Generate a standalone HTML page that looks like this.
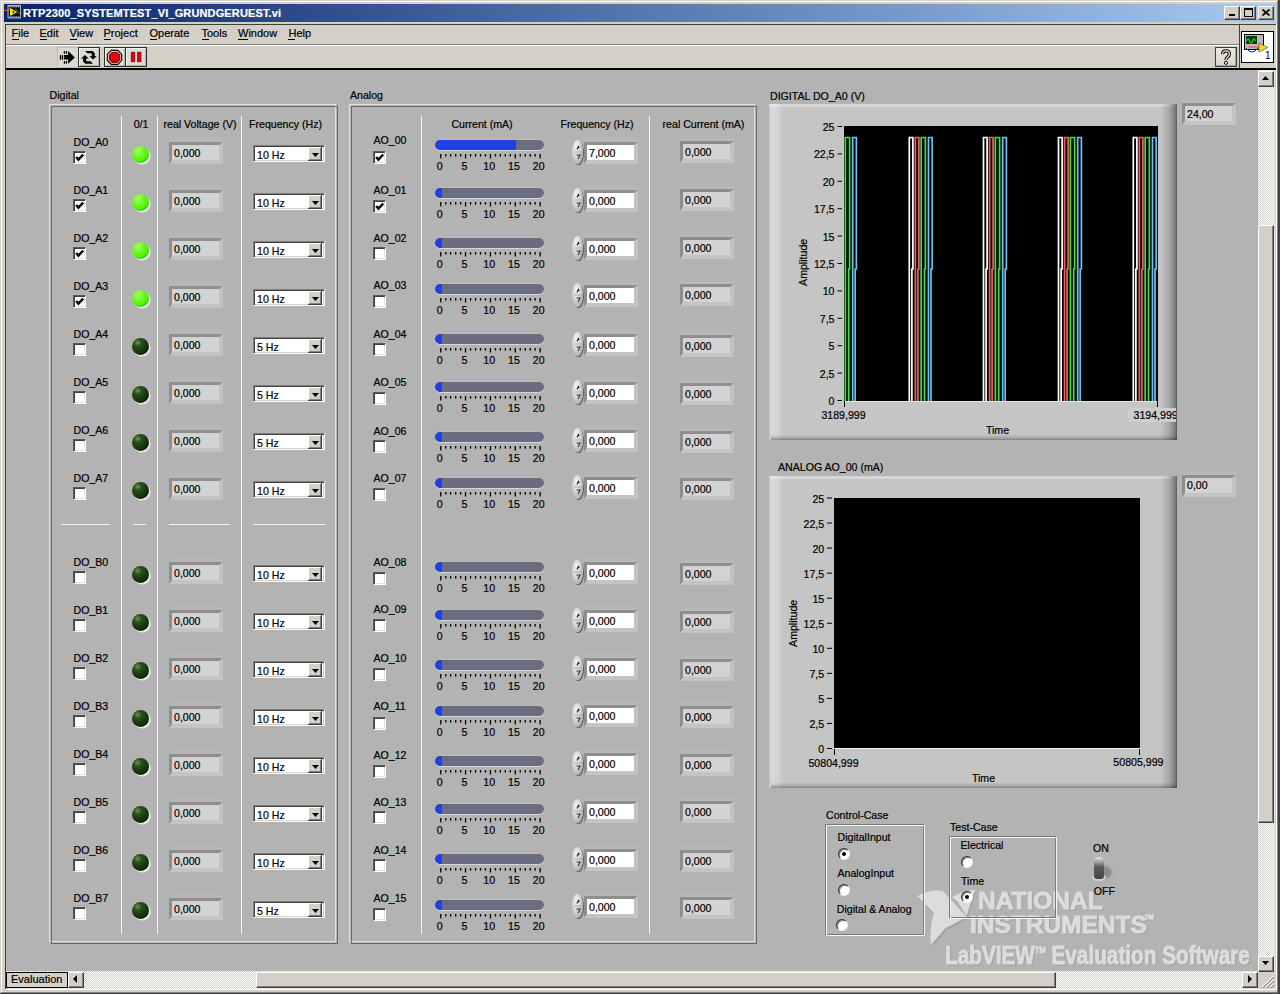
<!DOCTYPE html>
<html><head><meta charset="utf-8"><style>
html,body{margin:0;padding:0;width:1280px;height:994px;overflow:hidden;background:#d4d0c8;position:relative}
div,svg{position:absolute}
.abs{position:absolute}
.t{font-family:"Liberation Sans",sans-serif;white-space:nowrap;line-height:1.2;-webkit-text-stroke-width:0.2px}
.cb{width:11px;height:11px;background:#fff;border-top:1px solid #5a5a5a;border-left:1px solid #5a5a5a;border-right:1px solid #fff;border-bottom:1px solid #fff;box-shadow:inset 1px 1px 0 #404040,inset -1px -1px 0 #e0e0e0}
.led{width:17px;height:17px;border-radius:50%;box-shadow:1.5px 1.5px 1px rgba(250,255,250,0.85)}
.ledon{background:radial-gradient(circle at 35% 30%,#a8ff78 0,#70ff22 30%,#55ee10 60%,#3cb818 85%,#2c6e22 100%)}
.ledoff{background:radial-gradient(circle at 33% 28%,#6e9a5a 0,#28521c 22%,#1a3c12 48%,#10260a 75%,#050d03 100%)}
.indtop{height:5px;background:linear-gradient(#b4b4b4,#b9b9b9)}
.ind{height:15px;background:#d3d3d3;border-top:3px solid #8e8e8e;border-left:3px solid #8e8e8e;border-right:4px solid #c2c2c2;border-bottom:4px solid #c4c4c4}
.ctl{background:#fff}
.incr{width:11px;height:24px;border-radius:50%;box-shadow:1px 1px 0 #5a5a5a;background:radial-gradient(ellipse at 40% 30%,#f4f4f4 0,#d2d2d2 45%,#a8a8a8 80%,#6a6a6a 100%)}
.ring{width:70px;height:15px;background:#fff;border-top:1px solid #808080;border-left:1px solid #808080;border-right:1px solid #fff;border-bottom:1px solid #fff;box-shadow:inset 1px 1px 0 #404040,inset -1px -1px 0 #d4d0c8}
.rbtn{left:54px;top:1px;width:13px;height:13px;background:#d4d0c8;border-right:1px solid #404040;border-bottom:1px solid #404040;box-shadow:inset 1px 1px 0 #fff,inset -1px -1px 0 #808080}
.sl{width:109px;height:10px;border-radius:5px;background:#6c6c80;overflow:hidden;box-shadow:0 1px 0 #d6d6d6,0 -1px 0 #bcbcbc}
.slf{left:0;top:0;height:10px;background:#1f40e4;border-radius:5px 0 0 5px}
.btn{background:#d4d0c8;border-top:1px solid #fff;border-left:1px solid #fff;border-right:1px solid #404040;border-bottom:1px solid #404040;box-shadow:inset -1px -1px 0 #808080}
.chk{background-color:#ebe9e5;background-image:repeating-conic-gradient(#ffffff 0 25%,#d4d0c8 0 50%);background-size:2px 2px}
</style></head><body>
<div style="left:0px;top:0px;width:1280px;height:1px;background:#d4d0c8"></div>
<div style="left:1px;top:1px;width:1277px;height:1px;background:#fff"></div>
<div style="left:1px;top:1px;width:1px;height:991px;background:#fff"></div>
<div style="left:1278px;top:0px;width:2px;height:994px;background:#404040"></div>
<div style="left:1277px;top:1px;width:1px;height:992px;background:#808080"></div>
<div style="left:0px;top:993px;width:1280px;height:1px;background:#404040"></div>
<div style="left:1px;top:992px;width:1277px;height:1px;background:#808080"></div>
<div style="left:4px;top:4px;width:1271px;height:18px;background:linear-gradient(90deg,#0a246a,#a6caf0)"></div>
<svg style="left:0;top:0" width="30" height="24"><rect x="8" y="5.5" width="12.5" height="12.5" fill="#28305a" stroke="#a8b0c0" stroke-width="1"/><path d="M9 6.5 H20 M9 17 H20" stroke="#d8dce4" stroke-width="1.2" stroke-dasharray="1.2 1"/><rect x="9" y="8" width="11" height="8" fill="#101010"/><path d="M4 10.5 H9" stroke="#c86030" stroke-width="1"/><path d="M18 13 H22" stroke="#c86030" stroke-width="1"/><path d="M10 8 V16 L17.5 12 Z" fill="#f2e030"/><path d="M10 8.5 V10" stroke="#ffb000" stroke-width="1.5"/><path d="M12.3 12 L13.5 10.8 L14.7 12 L13.5 13.2Z" fill="#302000"/><path d="M15 9 Q17 9.5 18.5 11" stroke="#2a8a2a" stroke-width="1" fill="none"/></svg>
<div class="t" style="left:23px;top:6.59px;font-size:11px;font-weight:700;color:#fff;letter-spacing:0.14px">RTP2300_SYSTEMTEST_VI_GRUNDGERUEST.vi</div>
<div class="btn" style="left:1224px;top:6px;width:14px;height:12px"></div>
<div class="btn" style="left:1240px;top:6px;width:14px;height:12px"></div>
<div class="btn" style="left:1258px;top:6px;width:14px;height:12px"></div>
<div style="left:1229px;top:14px;width:6px;height:2px;background:#000"></div>
<div style="left:1244px;top:8px;width:7px;height:6px;border:1px solid #000;border-top-width:2px"></div>
<svg style="left:1262px;top:9px" width="8" height="7"><path d="M0.5 0.5 L7.5 6.5 M7.5 0.5 L0.5 6.5" stroke="#000" stroke-width="1.6"/></svg>
<div style="left:5px;top:24px;width:1px;height:965px;background:#404040"></div>
<div style="left:5px;top:24px;width:1271px;height:1px;background:#404040"></div>
<div style="left:1276px;top:24px;width:1px;height:966px;background:#fff"></div>
<div style="left:5px;top:989px;width:1272px;height:1px;background:#fff"></div>
<div class="t" style="left:11.5px;top:27.09px;font-size:11px;font-weight:400;color:#000;">File</div>
<div style="left:12px;top:39px;width:7px;height:1px;background:#000"></div>
<div class="t" style="left:39.5px;top:27.09px;font-size:11px;font-weight:400;color:#000;">Edit</div>
<div style="left:40px;top:39px;width:7px;height:1px;background:#000"></div>
<div class="t" style="left:69.5px;top:27.09px;font-size:11px;font-weight:400;color:#000;">View</div>
<div style="left:70px;top:39px;width:7px;height:1px;background:#000"></div>
<div class="t" style="left:103.5px;top:27.09px;font-size:11px;font-weight:400;color:#000;">Project</div>
<div style="left:104px;top:39px;width:7px;height:1px;background:#000"></div>
<div class="t" style="left:149.5px;top:27.09px;font-size:11px;font-weight:400;color:#000;">Operate</div>
<div style="left:150px;top:39px;width:7px;height:1px;background:#000"></div>
<div class="t" style="left:201.5px;top:27.09px;font-size:11px;font-weight:400;color:#000;">Tools</div>
<div style="left:202px;top:39px;width:7px;height:1px;background:#000"></div>
<div class="t" style="left:238px;top:27.09px;font-size:11px;font-weight:400;color:#000;">Window</div>
<div style="left:238px;top:39px;width:10px;height:1px;background:#000"></div>
<div class="t" style="left:288.5px;top:27.09px;font-size:11px;font-weight:400;color:#000;">Help</div>
<div style="left:288px;top:39px;width:7px;height:1px;background:#000"></div>
<div style="left:6px;top:44px;width:1233px;height:1px;background:#808080"></div>
<div style="left:6px;top:45px;width:1233px;height:1px;background:#fff"></div>
<div style="left:1239px;top:25px;width:1px;height:44px;background:#404040"></div>
<div style="left:1241px;top:31px;width:31px;height:30px;background:#fff;border:1px solid #000"></div>
<svg style="left:1242px;top:32px" width="31" height="30"><rect x="2.5" y="2.5" width="19" height="15" fill="#b9b9b9" stroke="#000" stroke-width="1"/><rect x="4" y="4" width="11" height="8" fill="#0a3a0a"/><path d="M4.5 9 Q6 4 7.5 9 T10.5 9 T13.5 9" stroke="#2f2" stroke-width="1" fill="none"/><path d="M4 16 Q10 24 16 16" stroke="#22a" stroke-width="1" fill="none"/><path d="M6 15 H20" stroke="#e66" stroke-width="1.5"/><path d="M17 11 L17 20 L26 15.5Z" fill="#f2e020" stroke="#444" stroke-width="0.6"/><text x="23" y="27" font-family="Liberation Sans" font-size="10" fill="#000">1</text></svg>
<div style="left:6px;top:68px;width:1270px;height:2px;background:#000"></div>
<div style="left:57px;top:47px;width:20px;height:19px;background:#dcd9d2;border:1px solid #c4c1ba;border-top-color:#bdbab3;border-left-color:#bdbab3"></div>
<svg style="left:0;top:0" width="160" height="70"><path d="M64.1 55.1 H68.1 V51 L74.9 57.4 L68.1 63.8 V59.6 H64.1Z" fill="#000"/><rect x="59.8" y="55.1" width="1.3" height="4.6" fill="#000"/><rect x="61.8" y="55.1" width="1.3" height="4.6" fill="#000"/><rect x="63.8" y="51.1" width="1.3" height="2.6" fill="#000"/><rect x="65.8" y="51.1" width="1.3" height="2.6" fill="#000"/><rect x="63.8" y="61.1" width="1.3" height="2.6" fill="#000"/><rect x="65.8" y="61.1" width="1.3" height="2.6" fill="#000"/></svg>
<div style="left:78px;top:47px;width:20px;height:18px;background:#dedbd4;border:1px solid #2e2e2e;box-shadow:inset 1px 1px 0 #f4f2ee,inset -1px -1px 0 #b4b1aa"></div>
<div style="left:104px;top:47px;width:20px;height:18px;background:#dedbd4;border:1px solid #2e2e2e;box-shadow:inset 1px 1px 0 #f4f2ee,inset -1px -1px 0 #b4b1aa"></div>
<div style="left:125px;top:47px;width:20px;height:18px;background:#dedbd4;border:1px solid #2e2e2e;box-shadow:inset 1px 1px 0 #f4f2ee,inset -1px -1px 0 #b4b1aa"></div>
<svg style="left:0;top:0" width="160" height="70"><path d="M85.1 51.1 H92.6 L94.8 53.3 V56.3 H96.8 L93.1 59.5 L89.3 56.3 H91.7 V53.3 H87.3 Z" fill="#000"/><path d="M92.9 63.7 H85.4 L83.1 61.5 V58.4 H81.1 L84.9 55.1 L88.8 58.4 H86.2 V61.3 H90.7 Z" fill="#000"/><path d="M111.3 50.4 H117.8 L121.7 54.4 V60.4 L117.8 64.4 H111.3 L107.3 60.4 V54.4 Z" fill="#ebe6e2" stroke="#000" stroke-width="1.1"/><path d="M111.8 52.4 H117.3 L119.8 54.9 V59.9 L117.3 62.4 H111.8 L109.3 59.9 V54.9 Z" fill="#e4000e" stroke="#5a0000" stroke-width="0.9"/><rect x="131.2" y="52.2" width="3.6" height="9.6" fill="#dc0010" stroke="#800000" stroke-width="0.7"/><rect x="137.4" y="52.2" width="3.6" height="9.6" fill="#dc0010" stroke="#800000" stroke-width="0.7"/></svg>
<div style="left:1215px;top:47px;width:20px;height:18px;background:linear-gradient(#eceae6,#d8d5ce);border:1px solid #3a3a3a;box-shadow:inset -1px -1px 0 #a8a59e"></div>
<svg style="left:1219px;top:49px" width="14" height="17"><path d="M3.6 5.2 Q3.6 1.8 7 1.8 Q10.4 1.8 10.4 5 Q10.4 7 8.2 8.4 Q7 9.2 7 11" stroke="#000" stroke-width="3.2" fill="none"/><path d="M3.6 5.2 Q3.6 1.8 7 1.8 Q10.4 1.8 10.4 5 Q10.4 7 8.2 8.4 Q7 9.2 7 11" stroke="#fffbd0" stroke-width="1.2" fill="none"/><circle cx="7" cy="13.8" r="1.6" fill="#fffbd0" stroke="#000" stroke-width="1"/></svg>
<div style="left:6px;top:70px;width:1252px;height:901px;background:#b3b3b3"></div>
<div class="chk" style="left:1258px;top:70px;width:17px;height:901px"></div>
<div class="btn" style="left:1258px;top:71px;width:14px;height:14px"></div>
<svg style="left:1262px;top:76px" width="7" height="4"><path d="M0 4 H7 L3.5 0Z" fill="#000"/></svg>
<div class="btn" style="left:1258px;top:225px;width:14px;height:596px"></div>
<div class="btn" style="left:1258px;top:956px;width:14px;height:14px"></div>
<svg style="left:1262px;top:961px" width="7" height="4"><path d="M0 0 H7 L3.5 4Z" fill="#000"/></svg>
<div class="chk" style="left:6px;top:971px;width:1252px;height:18px"></div>
<div style="left:6px;top:972px;width:60px;height:14px;background:#d4d0c8;border:1px solid #000"></div>
<div class="t" style="left:11px;top:973.09px;font-size:11px;font-weight:400;color:#000;">Evaluation</div>
<div class="btn" style="left:68px;top:972px;width:14px;height:14px"></div>
<svg style="left:73px;top:975px" width="4" height="8"><path d="M4 0 V8 L0 4Z" fill="#000"/></svg>
<div class="btn" style="left:256px;top:972px;width:798px;height:14px"></div>
<div class="btn" style="left:1242px;top:972px;width:14px;height:14px"></div>
<svg style="left:1248px;top:975px" width="4" height="8"><path d="M0 0 V8 L4 4Z" fill="#000"/></svg>
<div style="left:1258px;top:972px;width:17px;height:17px;background:#d4d0c8"></div>
<svg style="left:1258px;top:972px" width="17" height="17"><path d="M15 4 L4 15 M15 8 L8 15 M15 12 L12 15" stroke="#fff" stroke-width="1"/><path d="M16 5 L5 16 M16 9 L9 16 M16 13 L13 16" stroke="#808080" stroke-width="1"/></svg>
<div class="t" style="left:49.5px;top:88.57px;font-size:10.6px;font-weight:400;color:#000;">Digital</div>
<div style="left:49px;top:104px;width:287px;height:838px;border:1px solid #e2e2e2;box-sizing:border-box"></div>
<div style="left:51px;top:106px;width:287px;height:838px;border:1px solid #6a6a6a;box-sizing:border-box"></div>
<div style="left:121px;top:116px;width:1px;height:818px;background:#f4f4f4"></div>
<div style="left:157px;top:116px;width:1px;height:818px;background:#f4f4f4"></div>
<div style="left:241px;top:116px;width:1px;height:818px;background:#f4f4f4"></div>
<div class="t" style="left:-9px;width:300px;text-align:center;top:117.77px;font-size:10.6px;font-weight:400;color:#000;">0/1</div>
<div class="t" style="left:50px;width:300px;text-align:center;top:117.77px;font-size:10.6px;font-weight:400;color:#000;">real Voltage (V)</div>
<div class="t" style="left:135.5px;width:300px;text-align:center;top:117.57px;font-size:10.6px;font-weight:400;color:#000;">Frequency (Hz)</div>
<div class="t" style="left:73.5px;top:135.97px;font-size:10.6px;font-weight:400;color:#000;">DO_A0</div>
<div class="cb" style="left:73px;top:151px"><svg width="9" height="9" style="position:absolute;left:1px;top:1px"><path d="M1.2 4 L3.4 6.6 L8.2 1.6" stroke="#000" stroke-width="2.4" fill="none"/></svg></div>
<div class="led ledon" style="left:132px;top:146px"></div>
<div class="indtop" style="left:169px;top:137px;width:54px"></div>
<div class="ind" style="left:169px;top:142px;width:47px"></div>
<div class="t" style="left:174px;top:146.97px;font-size:10.6px;font-weight:400;color:#000;">0,000</div>
<div class="ring" style="left:253px;top:145px"><div class="rbtn"><svg width="7" height="4" style="position:absolute;left:4px;top:6px"><path d="M0 0 H7 L3.5 4Z" fill="#000"/></svg></div></div>
<div class="t" style="left:257px;top:148.97px;font-size:10.6px;font-weight:400;color:#000;">10 Hz</div>
<div class="t" style="left:73.5px;top:183.97px;font-size:10.6px;font-weight:400;color:#000;">DO_A1</div>
<div class="cb" style="left:73px;top:199px"><svg width="9" height="9" style="position:absolute;left:1px;top:1px"><path d="M1.2 4 L3.4 6.6 L8.2 1.6" stroke="#000" stroke-width="2.4" fill="none"/></svg></div>
<div class="led ledon" style="left:132px;top:194px"></div>
<div class="indtop" style="left:169px;top:185px;width:54px"></div>
<div class="ind" style="left:169px;top:190px;width:47px"></div>
<div class="t" style="left:174px;top:194.97px;font-size:10.6px;font-weight:400;color:#000;">0,000</div>
<div class="ring" style="left:253px;top:193px"><div class="rbtn"><svg width="7" height="4" style="position:absolute;left:4px;top:6px"><path d="M0 0 H7 L3.5 4Z" fill="#000"/></svg></div></div>
<div class="t" style="left:257px;top:196.97px;font-size:10.6px;font-weight:400;color:#000;">10 Hz</div>
<div class="t" style="left:73.5px;top:231.97px;font-size:10.6px;font-weight:400;color:#000;">DO_A2</div>
<div class="cb" style="left:73px;top:247px"><svg width="9" height="9" style="position:absolute;left:1px;top:1px"><path d="M1.2 4 L3.4 6.6 L8.2 1.6" stroke="#000" stroke-width="2.4" fill="none"/></svg></div>
<div class="led ledon" style="left:132px;top:242px"></div>
<div class="indtop" style="left:169px;top:233px;width:54px"></div>
<div class="ind" style="left:169px;top:238px;width:47px"></div>
<div class="t" style="left:174px;top:242.97px;font-size:10.6px;font-weight:400;color:#000;">0,000</div>
<div class="ring" style="left:253px;top:241px"><div class="rbtn"><svg width="7" height="4" style="position:absolute;left:4px;top:6px"><path d="M0 0 H7 L3.5 4Z" fill="#000"/></svg></div></div>
<div class="t" style="left:257px;top:244.97px;font-size:10.6px;font-weight:400;color:#000;">10 Hz</div>
<div class="t" style="left:73.5px;top:279.97px;font-size:10.6px;font-weight:400;color:#000;">DO_A3</div>
<div class="cb" style="left:73px;top:295px"><svg width="9" height="9" style="position:absolute;left:1px;top:1px"><path d="M1.2 4 L3.4 6.6 L8.2 1.6" stroke="#000" stroke-width="2.4" fill="none"/></svg></div>
<div class="led ledon" style="left:132px;top:290px"></div>
<div class="indtop" style="left:169px;top:281px;width:54px"></div>
<div class="ind" style="left:169px;top:286px;width:47px"></div>
<div class="t" style="left:174px;top:290.97px;font-size:10.6px;font-weight:400;color:#000;">0,000</div>
<div class="ring" style="left:253px;top:289px"><div class="rbtn"><svg width="7" height="4" style="position:absolute;left:4px;top:6px"><path d="M0 0 H7 L3.5 4Z" fill="#000"/></svg></div></div>
<div class="t" style="left:257px;top:292.97px;font-size:10.6px;font-weight:400;color:#000;">10 Hz</div>
<div class="t" style="left:73.5px;top:327.97px;font-size:10.6px;font-weight:400;color:#000;">DO_A4</div>
<div class="cb" style="left:73px;top:343px"></div>
<div class="led ledoff" style="left:132px;top:338px"></div>
<div class="indtop" style="left:169px;top:329px;width:54px"></div>
<div class="ind" style="left:169px;top:334px;width:47px"></div>
<div class="t" style="left:174px;top:338.97px;font-size:10.6px;font-weight:400;color:#000;">0,000</div>
<div class="ring" style="left:253px;top:337px"><div class="rbtn"><svg width="7" height="4" style="position:absolute;left:4px;top:6px"><path d="M0 0 H7 L3.5 4Z" fill="#000"/></svg></div></div>
<div class="t" style="left:257px;top:340.97px;font-size:10.6px;font-weight:400;color:#000;">5 Hz</div>
<div class="t" style="left:73.5px;top:375.97px;font-size:10.6px;font-weight:400;color:#000;">DO_A5</div>
<div class="cb" style="left:73px;top:391px"></div>
<div class="led ledoff" style="left:132px;top:386px"></div>
<div class="indtop" style="left:169px;top:377px;width:54px"></div>
<div class="ind" style="left:169px;top:382px;width:47px"></div>
<div class="t" style="left:174px;top:386.97px;font-size:10.6px;font-weight:400;color:#000;">0,000</div>
<div class="ring" style="left:253px;top:385px"><div class="rbtn"><svg width="7" height="4" style="position:absolute;left:4px;top:6px"><path d="M0 0 H7 L3.5 4Z" fill="#000"/></svg></div></div>
<div class="t" style="left:257px;top:388.97px;font-size:10.6px;font-weight:400;color:#000;">5 Hz</div>
<div class="t" style="left:73.5px;top:423.97px;font-size:10.6px;font-weight:400;color:#000;">DO_A6</div>
<div class="cb" style="left:73px;top:439px"></div>
<div class="led ledoff" style="left:132px;top:434px"></div>
<div class="indtop" style="left:169px;top:425px;width:54px"></div>
<div class="ind" style="left:169px;top:430px;width:47px"></div>
<div class="t" style="left:174px;top:434.97px;font-size:10.6px;font-weight:400;color:#000;">0,000</div>
<div class="ring" style="left:253px;top:433px"><div class="rbtn"><svg width="7" height="4" style="position:absolute;left:4px;top:6px"><path d="M0 0 H7 L3.5 4Z" fill="#000"/></svg></div></div>
<div class="t" style="left:257px;top:436.97px;font-size:10.6px;font-weight:400;color:#000;">5 Hz</div>
<div class="t" style="left:73.5px;top:471.97px;font-size:10.6px;font-weight:400;color:#000;">DO_A7</div>
<div class="cb" style="left:73px;top:487px"></div>
<div class="led ledoff" style="left:132px;top:482px"></div>
<div class="indtop" style="left:169px;top:473px;width:54px"></div>
<div class="ind" style="left:169px;top:478px;width:47px"></div>
<div class="t" style="left:174px;top:482.97px;font-size:10.6px;font-weight:400;color:#000;">0,000</div>
<div class="ring" style="left:253px;top:481px"><div class="rbtn"><svg width="7" height="4" style="position:absolute;left:4px;top:6px"><path d="M0 0 H7 L3.5 4Z" fill="#000"/></svg></div></div>
<div class="t" style="left:257px;top:484.97px;font-size:10.6px;font-weight:400;color:#000;">10 Hz</div>
<div class="t" style="left:73.5px;top:555.97px;font-size:10.6px;font-weight:400;color:#000;">DO_B0</div>
<div class="cb" style="left:73px;top:571px"></div>
<div class="led ledoff" style="left:132px;top:566px"></div>
<div class="indtop" style="left:169px;top:557px;width:54px"></div>
<div class="ind" style="left:169px;top:562px;width:47px"></div>
<div class="t" style="left:174px;top:566.97px;font-size:10.6px;font-weight:400;color:#000;">0,000</div>
<div class="ring" style="left:253px;top:565px"><div class="rbtn"><svg width="7" height="4" style="position:absolute;left:4px;top:6px"><path d="M0 0 H7 L3.5 4Z" fill="#000"/></svg></div></div>
<div class="t" style="left:257px;top:568.97px;font-size:10.6px;font-weight:400;color:#000;">10 Hz</div>
<div class="t" style="left:73.5px;top:603.97px;font-size:10.6px;font-weight:400;color:#000;">DO_B1</div>
<div class="cb" style="left:73px;top:619px"></div>
<div class="led ledoff" style="left:132px;top:614px"></div>
<div class="indtop" style="left:169px;top:605px;width:54px"></div>
<div class="ind" style="left:169px;top:610px;width:47px"></div>
<div class="t" style="left:174px;top:614.97px;font-size:10.6px;font-weight:400;color:#000;">0,000</div>
<div class="ring" style="left:253px;top:613px"><div class="rbtn"><svg width="7" height="4" style="position:absolute;left:4px;top:6px"><path d="M0 0 H7 L3.5 4Z" fill="#000"/></svg></div></div>
<div class="t" style="left:257px;top:616.97px;font-size:10.6px;font-weight:400;color:#000;">10 Hz</div>
<div class="t" style="left:73.5px;top:651.97px;font-size:10.6px;font-weight:400;color:#000;">DO_B2</div>
<div class="cb" style="left:73px;top:667px"></div>
<div class="led ledoff" style="left:132px;top:662px"></div>
<div class="indtop" style="left:169px;top:653px;width:54px"></div>
<div class="ind" style="left:169px;top:658px;width:47px"></div>
<div class="t" style="left:174px;top:662.97px;font-size:10.6px;font-weight:400;color:#000;">0,000</div>
<div class="ring" style="left:253px;top:661px"><div class="rbtn"><svg width="7" height="4" style="position:absolute;left:4px;top:6px"><path d="M0 0 H7 L3.5 4Z" fill="#000"/></svg></div></div>
<div class="t" style="left:257px;top:664.97px;font-size:10.6px;font-weight:400;color:#000;">10 Hz</div>
<div class="t" style="left:73.5px;top:699.97px;font-size:10.6px;font-weight:400;color:#000;">DO_B3</div>
<div class="cb" style="left:73px;top:715px"></div>
<div class="led ledoff" style="left:132px;top:710px"></div>
<div class="indtop" style="left:169px;top:701px;width:54px"></div>
<div class="ind" style="left:169px;top:706px;width:47px"></div>
<div class="t" style="left:174px;top:710.97px;font-size:10.6px;font-weight:400;color:#000;">0,000</div>
<div class="ring" style="left:253px;top:709px"><div class="rbtn"><svg width="7" height="4" style="position:absolute;left:4px;top:6px"><path d="M0 0 H7 L3.5 4Z" fill="#000"/></svg></div></div>
<div class="t" style="left:257px;top:712.97px;font-size:10.6px;font-weight:400;color:#000;">10 Hz</div>
<div class="t" style="left:73.5px;top:747.97px;font-size:10.6px;font-weight:400;color:#000;">DO_B4</div>
<div class="cb" style="left:73px;top:763px"></div>
<div class="led ledoff" style="left:132px;top:758px"></div>
<div class="indtop" style="left:169px;top:749px;width:54px"></div>
<div class="ind" style="left:169px;top:754px;width:47px"></div>
<div class="t" style="left:174px;top:758.97px;font-size:10.6px;font-weight:400;color:#000;">0,000</div>
<div class="ring" style="left:253px;top:757px"><div class="rbtn"><svg width="7" height="4" style="position:absolute;left:4px;top:6px"><path d="M0 0 H7 L3.5 4Z" fill="#000"/></svg></div></div>
<div class="t" style="left:257px;top:760.97px;font-size:10.6px;font-weight:400;color:#000;">10 Hz</div>
<div class="t" style="left:73.5px;top:795.97px;font-size:10.6px;font-weight:400;color:#000;">DO_B5</div>
<div class="cb" style="left:73px;top:811px"></div>
<div class="led ledoff" style="left:132px;top:806px"></div>
<div class="indtop" style="left:169px;top:797px;width:54px"></div>
<div class="ind" style="left:169px;top:802px;width:47px"></div>
<div class="t" style="left:174px;top:806.97px;font-size:10.6px;font-weight:400;color:#000;">0,000</div>
<div class="ring" style="left:253px;top:805px"><div class="rbtn"><svg width="7" height="4" style="position:absolute;left:4px;top:6px"><path d="M0 0 H7 L3.5 4Z" fill="#000"/></svg></div></div>
<div class="t" style="left:257px;top:808.97px;font-size:10.6px;font-weight:400;color:#000;">10 Hz</div>
<div class="t" style="left:73.5px;top:843.97px;font-size:10.6px;font-weight:400;color:#000;">DO_B6</div>
<div class="cb" style="left:73px;top:859px"></div>
<div class="led ledoff" style="left:132px;top:854px"></div>
<div class="indtop" style="left:169px;top:845px;width:54px"></div>
<div class="ind" style="left:169px;top:850px;width:47px"></div>
<div class="t" style="left:174px;top:854.97px;font-size:10.6px;font-weight:400;color:#000;">0,000</div>
<div class="ring" style="left:253px;top:853px"><div class="rbtn"><svg width="7" height="4" style="position:absolute;left:4px;top:6px"><path d="M0 0 H7 L3.5 4Z" fill="#000"/></svg></div></div>
<div class="t" style="left:257px;top:856.97px;font-size:10.6px;font-weight:400;color:#000;">10 Hz</div>
<div class="t" style="left:73.5px;top:891.97px;font-size:10.6px;font-weight:400;color:#000;">DO_B7</div>
<div class="cb" style="left:73px;top:907px"></div>
<div class="led ledoff" style="left:132px;top:902px"></div>
<div class="indtop" style="left:169px;top:893px;width:54px"></div>
<div class="ind" style="left:169px;top:898px;width:47px"></div>
<div class="t" style="left:174px;top:902.97px;font-size:10.6px;font-weight:400;color:#000;">0,000</div>
<div class="ring" style="left:253px;top:901px"><div class="rbtn"><svg width="7" height="4" style="position:absolute;left:4px;top:6px"><path d="M0 0 H7 L3.5 4Z" fill="#000"/></svg></div></div>
<div class="t" style="left:257px;top:904.97px;font-size:10.6px;font-weight:400;color:#000;">5 Hz</div>
<div style="left:61px;top:524px;width:49px;height:1px;background:#f4f4f4"></div>
<div style="left:133px;top:524px;width:13px;height:1px;background:#f4f4f4"></div>
<div style="left:169px;top:524px;width:61px;height:1px;background:#f4f4f4"></div>
<div style="left:253px;top:524px;width:72px;height:1px;background:#f4f4f4"></div>
<div class="t" style="left:350px;top:88.57px;font-size:10.6px;font-weight:400;color:#000;">Analog</div>
<div style="left:349px;top:104px;width:406px;height:838px;border:1px solid #e2e2e2;box-sizing:border-box"></div>
<div style="left:351px;top:106px;width:406px;height:838px;border:1px solid #6a6a6a;box-sizing:border-box"></div>
<div style="left:421px;top:116px;width:1px;height:818px;background:#f4f4f4"></div>
<div style="left:649px;top:116px;width:1px;height:818px;background:#f4f4f4"></div>
<div class="t" style="left:332px;width:300px;text-align:center;top:117.57px;font-size:10.6px;font-weight:400;color:#000;">Current (mA)</div>
<div class="t" style="left:447px;width:300px;text-align:center;top:117.57px;font-size:10.6px;font-weight:400;color:#000;">Frequency (Hz)</div>
<div class="t" style="left:553.5px;width:300px;text-align:center;top:117.57px;font-size:10.6px;font-weight:400;color:#000;">real Current (mA)</div>
<div class="t" style="left:373.5px;top:134.47px;font-size:10.6px;font-weight:400;color:#000;">AO_00</div>
<div class="cb" style="left:373px;top:151px"><svg width="9" height="9" style="position:absolute;left:1px;top:1px"><path d="M1.2 4 L3.4 6.6 L8.2 1.6" stroke="#000" stroke-width="2.4" fill="none"/></svg></div>
<div class="sl" style="left:435px;top:140px"><div class="slf" style="width:81px"></div></div>
<svg class="abs" style="left:0;top:154.2px" width="1280" height="5"><rect x="440.1" y="0" width="1.3" height="4.5" fill="#000"/><rect x="445.1" y="0" width="1.3" height="2.6" fill="#000"/><rect x="450.0" y="0" width="1.3" height="2.6" fill="#000"/><rect x="455.0" y="0" width="1.3" height="2.6" fill="#000"/><rect x="460.0" y="0" width="1.3" height="2.6" fill="#000"/><rect x="464.9" y="0" width="1.3" height="4.5" fill="#000"/><rect x="469.9" y="0" width="1.3" height="2.6" fill="#000"/><rect x="474.9" y="0" width="1.3" height="2.6" fill="#000"/><rect x="479.9" y="0" width="1.3" height="2.6" fill="#000"/><rect x="484.8" y="0" width="1.3" height="2.6" fill="#000"/><rect x="489.8" y="0" width="1.3" height="4.5" fill="#000"/><rect x="494.8" y="0" width="1.3" height="2.6" fill="#000"/><rect x="499.7" y="0" width="1.3" height="2.6" fill="#000"/><rect x="504.7" y="0" width="1.3" height="2.6" fill="#000"/><rect x="509.7" y="0" width="1.3" height="2.6" fill="#000"/><rect x="514.6" y="0" width="1.3" height="4.5" fill="#000"/><rect x="519.6" y="0" width="1.3" height="2.6" fill="#000"/><rect x="524.6" y="0" width="1.3" height="2.6" fill="#000"/><rect x="529.6" y="0" width="1.3" height="2.6" fill="#000"/><rect x="534.5" y="0" width="1.3" height="2.6" fill="#000"/><rect x="539.5" y="0" width="1.3" height="4.5" fill="#000"/></svg>
<div class="t" style="left:289.7px;width:300px;text-align:center;top:159.77px;font-size:10.6px;font-weight:400;color:#000;">0</div>
<div class="t" style="left:314.45px;width:300px;text-align:center;top:159.77px;font-size:10.6px;font-weight:400;color:#000;">5</div>
<div class="t" style="left:339.2px;width:300px;text-align:center;top:159.77px;font-size:10.6px;font-weight:400;color:#000;">10</div>
<div class="t" style="left:363.95000000000005px;width:300px;text-align:center;top:159.77px;font-size:10.6px;font-weight:400;color:#000;">15</div>
<div class="t" style="left:388.70000000000005px;width:300px;text-align:center;top:159.77px;font-size:10.6px;font-weight:400;color:#000;">20</div>
<div class="indtop" style="left:584px;top:137px;width:54px"></div>
<div class="ind ctl" style="left:584px;top:142px;width:47px"></div>
<div class="t" style="left:589px;top:146.97px;font-size:10.6px;font-weight:400;color:#000;">7,000</div>
<div class="incr" style="left:572px;top:139.6px"></div>
<svg style="left:572px;top:139.6px" width="12" height="24"><path d="M6.5 6 L5 9.5 M6.5 6 L7 8" stroke="#222" stroke-width="1.1" fill="none"/><path d="M2 12 H10" stroke="#999" stroke-width="0.8"/><path d="M4.5 15 H8 L6 19" stroke="#333" stroke-width="1.1" fill="none"/></svg>
<div class="indtop" style="left:680px;top:136px;width:54px"></div>
<div class="ind" style="left:680px;top:141px;width:47px"></div>
<div class="t" style="left:685px;top:145.97px;font-size:10.6px;font-weight:400;color:#000;">0,000</div>
<div class="t" style="left:373.5px;top:184.47px;font-size:10.6px;font-weight:400;color:#000;">AO_01</div>
<div class="cb" style="left:373px;top:200px"><svg width="9" height="9" style="position:absolute;left:1px;top:1px"><path d="M1.2 4 L3.4 6.6 L8.2 1.6" stroke="#000" stroke-width="2.4" fill="none"/></svg></div>
<div class="sl" style="left:435px;top:188px"><div class="slf" style="width:7px"></div></div>
<svg class="abs" style="left:0;top:202.2px" width="1280" height="5"><rect x="440.1" y="0" width="1.3" height="4.5" fill="#000"/><rect x="445.1" y="0" width="1.3" height="2.6" fill="#000"/><rect x="450.0" y="0" width="1.3" height="2.6" fill="#000"/><rect x="455.0" y="0" width="1.3" height="2.6" fill="#000"/><rect x="460.0" y="0" width="1.3" height="2.6" fill="#000"/><rect x="464.9" y="0" width="1.3" height="4.5" fill="#000"/><rect x="469.9" y="0" width="1.3" height="2.6" fill="#000"/><rect x="474.9" y="0" width="1.3" height="2.6" fill="#000"/><rect x="479.9" y="0" width="1.3" height="2.6" fill="#000"/><rect x="484.8" y="0" width="1.3" height="2.6" fill="#000"/><rect x="489.8" y="0" width="1.3" height="4.5" fill="#000"/><rect x="494.8" y="0" width="1.3" height="2.6" fill="#000"/><rect x="499.7" y="0" width="1.3" height="2.6" fill="#000"/><rect x="504.7" y="0" width="1.3" height="2.6" fill="#000"/><rect x="509.7" y="0" width="1.3" height="2.6" fill="#000"/><rect x="514.6" y="0" width="1.3" height="4.5" fill="#000"/><rect x="519.6" y="0" width="1.3" height="2.6" fill="#000"/><rect x="524.6" y="0" width="1.3" height="2.6" fill="#000"/><rect x="529.6" y="0" width="1.3" height="2.6" fill="#000"/><rect x="534.5" y="0" width="1.3" height="2.6" fill="#000"/><rect x="539.5" y="0" width="1.3" height="4.5" fill="#000"/></svg>
<div class="t" style="left:289.7px;width:300px;text-align:center;top:207.77px;font-size:10.6px;font-weight:400;color:#000;">0</div>
<div class="t" style="left:314.45px;width:300px;text-align:center;top:207.77px;font-size:10.6px;font-weight:400;color:#000;">5</div>
<div class="t" style="left:339.2px;width:300px;text-align:center;top:207.77px;font-size:10.6px;font-weight:400;color:#000;">10</div>
<div class="t" style="left:363.95000000000005px;width:300px;text-align:center;top:207.77px;font-size:10.6px;font-weight:400;color:#000;">15</div>
<div class="t" style="left:388.70000000000005px;width:300px;text-align:center;top:207.77px;font-size:10.6px;font-weight:400;color:#000;">20</div>
<div class="indtop" style="left:584px;top:185px;width:54px"></div>
<div class="ind ctl" style="left:584px;top:190px;width:47px"></div>
<div class="t" style="left:589px;top:194.97px;font-size:10.6px;font-weight:400;color:#000;">0,000</div>
<div class="incr" style="left:572px;top:187.6px"></div>
<svg style="left:572px;top:187.6px" width="12" height="24"><path d="M6.5 6 L5 9.5 M6.5 6 L7 8" stroke="#222" stroke-width="1.1" fill="none"/><path d="M2 12 H10" stroke="#999" stroke-width="0.8"/><path d="M4.5 15 H8 L6 19" stroke="#333" stroke-width="1.1" fill="none"/></svg>
<div class="indtop" style="left:680px;top:184px;width:54px"></div>
<div class="ind" style="left:680px;top:189px;width:47px"></div>
<div class="t" style="left:685px;top:193.97px;font-size:10.6px;font-weight:400;color:#000;">0,000</div>
<div class="t" style="left:373.5px;top:231.57px;font-size:10.6px;font-weight:400;color:#000;">AO_02</div>
<div class="cb" style="left:373px;top:247px"></div>
<div class="sl" style="left:435px;top:238px"><div class="slf" style="width:7px"></div></div>
<svg class="abs" style="left:0;top:252.2px" width="1280" height="5"><rect x="440.1" y="0" width="1.3" height="4.5" fill="#000"/><rect x="445.1" y="0" width="1.3" height="2.6" fill="#000"/><rect x="450.0" y="0" width="1.3" height="2.6" fill="#000"/><rect x="455.0" y="0" width="1.3" height="2.6" fill="#000"/><rect x="460.0" y="0" width="1.3" height="2.6" fill="#000"/><rect x="464.9" y="0" width="1.3" height="4.5" fill="#000"/><rect x="469.9" y="0" width="1.3" height="2.6" fill="#000"/><rect x="474.9" y="0" width="1.3" height="2.6" fill="#000"/><rect x="479.9" y="0" width="1.3" height="2.6" fill="#000"/><rect x="484.8" y="0" width="1.3" height="2.6" fill="#000"/><rect x="489.8" y="0" width="1.3" height="4.5" fill="#000"/><rect x="494.8" y="0" width="1.3" height="2.6" fill="#000"/><rect x="499.7" y="0" width="1.3" height="2.6" fill="#000"/><rect x="504.7" y="0" width="1.3" height="2.6" fill="#000"/><rect x="509.7" y="0" width="1.3" height="2.6" fill="#000"/><rect x="514.6" y="0" width="1.3" height="4.5" fill="#000"/><rect x="519.6" y="0" width="1.3" height="2.6" fill="#000"/><rect x="524.6" y="0" width="1.3" height="2.6" fill="#000"/><rect x="529.6" y="0" width="1.3" height="2.6" fill="#000"/><rect x="534.5" y="0" width="1.3" height="2.6" fill="#000"/><rect x="539.5" y="0" width="1.3" height="4.5" fill="#000"/></svg>
<div class="t" style="left:289.7px;width:300px;text-align:center;top:257.77px;font-size:10.6px;font-weight:400;color:#000;">0</div>
<div class="t" style="left:314.45px;width:300px;text-align:center;top:257.77px;font-size:10.6px;font-weight:400;color:#000;">5</div>
<div class="t" style="left:339.2px;width:300px;text-align:center;top:257.77px;font-size:10.6px;font-weight:400;color:#000;">10</div>
<div class="t" style="left:363.95000000000005px;width:300px;text-align:center;top:257.77px;font-size:10.6px;font-weight:400;color:#000;">15</div>
<div class="t" style="left:388.70000000000005px;width:300px;text-align:center;top:257.77px;font-size:10.6px;font-weight:400;color:#000;">20</div>
<div class="indtop" style="left:584px;top:233px;width:54px"></div>
<div class="ind ctl" style="left:584px;top:238px;width:47px"></div>
<div class="t" style="left:589px;top:242.97px;font-size:10.6px;font-weight:400;color:#000;">0,000</div>
<div class="incr" style="left:572px;top:235.6px"></div>
<svg style="left:572px;top:235.6px" width="12" height="24"><path d="M6.5 6 L5 9.5 M6.5 6 L7 8" stroke="#222" stroke-width="1.1" fill="none"/><path d="M2 12 H10" stroke="#999" stroke-width="0.8"/><path d="M4.5 15 H8 L6 19" stroke="#333" stroke-width="1.1" fill="none"/></svg>
<div class="indtop" style="left:680px;top:232px;width:54px"></div>
<div class="ind" style="left:680px;top:237px;width:47px"></div>
<div class="t" style="left:685px;top:241.97px;font-size:10.6px;font-weight:400;color:#000;">0,000</div>
<div class="t" style="left:373.5px;top:279.27px;font-size:10.6px;font-weight:400;color:#000;">AO_03</div>
<div class="cb" style="left:373px;top:295px"></div>
<div class="sl" style="left:435px;top:284px"><div class="slf" style="width:7px"></div></div>
<svg class="abs" style="left:0;top:298.2px" width="1280" height="5"><rect x="440.1" y="0" width="1.3" height="4.5" fill="#000"/><rect x="445.1" y="0" width="1.3" height="2.6" fill="#000"/><rect x="450.0" y="0" width="1.3" height="2.6" fill="#000"/><rect x="455.0" y="0" width="1.3" height="2.6" fill="#000"/><rect x="460.0" y="0" width="1.3" height="2.6" fill="#000"/><rect x="464.9" y="0" width="1.3" height="4.5" fill="#000"/><rect x="469.9" y="0" width="1.3" height="2.6" fill="#000"/><rect x="474.9" y="0" width="1.3" height="2.6" fill="#000"/><rect x="479.9" y="0" width="1.3" height="2.6" fill="#000"/><rect x="484.8" y="0" width="1.3" height="2.6" fill="#000"/><rect x="489.8" y="0" width="1.3" height="4.5" fill="#000"/><rect x="494.8" y="0" width="1.3" height="2.6" fill="#000"/><rect x="499.7" y="0" width="1.3" height="2.6" fill="#000"/><rect x="504.7" y="0" width="1.3" height="2.6" fill="#000"/><rect x="509.7" y="0" width="1.3" height="2.6" fill="#000"/><rect x="514.6" y="0" width="1.3" height="4.5" fill="#000"/><rect x="519.6" y="0" width="1.3" height="2.6" fill="#000"/><rect x="524.6" y="0" width="1.3" height="2.6" fill="#000"/><rect x="529.6" y="0" width="1.3" height="2.6" fill="#000"/><rect x="534.5" y="0" width="1.3" height="2.6" fill="#000"/><rect x="539.5" y="0" width="1.3" height="4.5" fill="#000"/></svg>
<div class="t" style="left:289.7px;width:300px;text-align:center;top:303.77px;font-size:10.6px;font-weight:400;color:#000;">0</div>
<div class="t" style="left:314.45px;width:300px;text-align:center;top:303.77px;font-size:10.6px;font-weight:400;color:#000;">5</div>
<div class="t" style="left:339.2px;width:300px;text-align:center;top:303.77px;font-size:10.6px;font-weight:400;color:#000;">10</div>
<div class="t" style="left:363.95000000000005px;width:300px;text-align:center;top:303.77px;font-size:10.6px;font-weight:400;color:#000;">15</div>
<div class="t" style="left:388.70000000000005px;width:300px;text-align:center;top:303.77px;font-size:10.6px;font-weight:400;color:#000;">20</div>
<div class="indtop" style="left:584px;top:280px;width:54px"></div>
<div class="ind ctl" style="left:584px;top:285px;width:47px"></div>
<div class="t" style="left:589px;top:289.97px;font-size:10.6px;font-weight:400;color:#000;">0,000</div>
<div class="incr" style="left:572px;top:282.6px"></div>
<svg style="left:572px;top:282.6px" width="12" height="24"><path d="M6.5 6 L5 9.5 M6.5 6 L7 8" stroke="#222" stroke-width="1.1" fill="none"/><path d="M2 12 H10" stroke="#999" stroke-width="0.8"/><path d="M4.5 15 H8 L6 19" stroke="#333" stroke-width="1.1" fill="none"/></svg>
<div class="indtop" style="left:680px;top:279px;width:54px"></div>
<div class="ind" style="left:680px;top:284px;width:47px"></div>
<div class="t" style="left:685px;top:288.97px;font-size:10.6px;font-weight:400;color:#000;">0,000</div>
<div class="t" style="left:373.5px;top:327.67px;font-size:10.6px;font-weight:400;color:#000;">AO_04</div>
<div class="cb" style="left:373px;top:343px"></div>
<div class="sl" style="left:435px;top:334px"><div class="slf" style="width:7px"></div></div>
<svg class="abs" style="left:0;top:348.2px" width="1280" height="5"><rect x="440.1" y="0" width="1.3" height="4.5" fill="#000"/><rect x="445.1" y="0" width="1.3" height="2.6" fill="#000"/><rect x="450.0" y="0" width="1.3" height="2.6" fill="#000"/><rect x="455.0" y="0" width="1.3" height="2.6" fill="#000"/><rect x="460.0" y="0" width="1.3" height="2.6" fill="#000"/><rect x="464.9" y="0" width="1.3" height="4.5" fill="#000"/><rect x="469.9" y="0" width="1.3" height="2.6" fill="#000"/><rect x="474.9" y="0" width="1.3" height="2.6" fill="#000"/><rect x="479.9" y="0" width="1.3" height="2.6" fill="#000"/><rect x="484.8" y="0" width="1.3" height="2.6" fill="#000"/><rect x="489.8" y="0" width="1.3" height="4.5" fill="#000"/><rect x="494.8" y="0" width="1.3" height="2.6" fill="#000"/><rect x="499.7" y="0" width="1.3" height="2.6" fill="#000"/><rect x="504.7" y="0" width="1.3" height="2.6" fill="#000"/><rect x="509.7" y="0" width="1.3" height="2.6" fill="#000"/><rect x="514.6" y="0" width="1.3" height="4.5" fill="#000"/><rect x="519.6" y="0" width="1.3" height="2.6" fill="#000"/><rect x="524.6" y="0" width="1.3" height="2.6" fill="#000"/><rect x="529.6" y="0" width="1.3" height="2.6" fill="#000"/><rect x="534.5" y="0" width="1.3" height="2.6" fill="#000"/><rect x="539.5" y="0" width="1.3" height="4.5" fill="#000"/></svg>
<div class="t" style="left:289.7px;width:300px;text-align:center;top:353.77px;font-size:10.6px;font-weight:400;color:#000;">0</div>
<div class="t" style="left:314.45px;width:300px;text-align:center;top:353.77px;font-size:10.6px;font-weight:400;color:#000;">5</div>
<div class="t" style="left:339.2px;width:300px;text-align:center;top:353.77px;font-size:10.6px;font-weight:400;color:#000;">10</div>
<div class="t" style="left:363.95000000000005px;width:300px;text-align:center;top:353.77px;font-size:10.6px;font-weight:400;color:#000;">15</div>
<div class="t" style="left:388.70000000000005px;width:300px;text-align:center;top:353.77px;font-size:10.6px;font-weight:400;color:#000;">20</div>
<div class="indtop" style="left:584px;top:329px;width:54px"></div>
<div class="ind ctl" style="left:584px;top:334px;width:47px"></div>
<div class="t" style="left:589px;top:338.97px;font-size:10.6px;font-weight:400;color:#000;">0,000</div>
<div class="incr" style="left:572px;top:331.6px"></div>
<svg style="left:572px;top:331.6px" width="12" height="24"><path d="M6.5 6 L5 9.5 M6.5 6 L7 8" stroke="#222" stroke-width="1.1" fill="none"/><path d="M2 12 H10" stroke="#999" stroke-width="0.8"/><path d="M4.5 15 H8 L6 19" stroke="#333" stroke-width="1.1" fill="none"/></svg>
<div class="indtop" style="left:680px;top:330px;width:54px"></div>
<div class="ind" style="left:680px;top:335px;width:47px"></div>
<div class="t" style="left:685px;top:339.97px;font-size:10.6px;font-weight:400;color:#000;">0,000</div>
<div class="t" style="left:373.5px;top:376.37px;font-size:10.6px;font-weight:400;color:#000;">AO_05</div>
<div class="cb" style="left:373px;top:392px"></div>
<div class="sl" style="left:435px;top:382px"><div class="slf" style="width:7px"></div></div>
<svg class="abs" style="left:0;top:396.2px" width="1280" height="5"><rect x="440.1" y="0" width="1.3" height="4.5" fill="#000"/><rect x="445.1" y="0" width="1.3" height="2.6" fill="#000"/><rect x="450.0" y="0" width="1.3" height="2.6" fill="#000"/><rect x="455.0" y="0" width="1.3" height="2.6" fill="#000"/><rect x="460.0" y="0" width="1.3" height="2.6" fill="#000"/><rect x="464.9" y="0" width="1.3" height="4.5" fill="#000"/><rect x="469.9" y="0" width="1.3" height="2.6" fill="#000"/><rect x="474.9" y="0" width="1.3" height="2.6" fill="#000"/><rect x="479.9" y="0" width="1.3" height="2.6" fill="#000"/><rect x="484.8" y="0" width="1.3" height="2.6" fill="#000"/><rect x="489.8" y="0" width="1.3" height="4.5" fill="#000"/><rect x="494.8" y="0" width="1.3" height="2.6" fill="#000"/><rect x="499.7" y="0" width="1.3" height="2.6" fill="#000"/><rect x="504.7" y="0" width="1.3" height="2.6" fill="#000"/><rect x="509.7" y="0" width="1.3" height="2.6" fill="#000"/><rect x="514.6" y="0" width="1.3" height="4.5" fill="#000"/><rect x="519.6" y="0" width="1.3" height="2.6" fill="#000"/><rect x="524.6" y="0" width="1.3" height="2.6" fill="#000"/><rect x="529.6" y="0" width="1.3" height="2.6" fill="#000"/><rect x="534.5" y="0" width="1.3" height="2.6" fill="#000"/><rect x="539.5" y="0" width="1.3" height="4.5" fill="#000"/></svg>
<div class="t" style="left:289.7px;width:300px;text-align:center;top:401.77px;font-size:10.6px;font-weight:400;color:#000;">0</div>
<div class="t" style="left:314.45px;width:300px;text-align:center;top:401.77px;font-size:10.6px;font-weight:400;color:#000;">5</div>
<div class="t" style="left:339.2px;width:300px;text-align:center;top:401.77px;font-size:10.6px;font-weight:400;color:#000;">10</div>
<div class="t" style="left:363.95000000000005px;width:300px;text-align:center;top:401.77px;font-size:10.6px;font-weight:400;color:#000;">15</div>
<div class="t" style="left:388.70000000000005px;width:300px;text-align:center;top:401.77px;font-size:10.6px;font-weight:400;color:#000;">20</div>
<div class="indtop" style="left:584px;top:377px;width:54px"></div>
<div class="ind ctl" style="left:584px;top:382px;width:47px"></div>
<div class="t" style="left:589px;top:386.97px;font-size:10.6px;font-weight:400;color:#000;">0,000</div>
<div class="incr" style="left:572px;top:379.6px"></div>
<svg style="left:572px;top:379.6px" width="12" height="24"><path d="M6.5 6 L5 9.5 M6.5 6 L7 8" stroke="#222" stroke-width="1.1" fill="none"/><path d="M2 12 H10" stroke="#999" stroke-width="0.8"/><path d="M4.5 15 H8 L6 19" stroke="#333" stroke-width="1.1" fill="none"/></svg>
<div class="indtop" style="left:680px;top:378px;width:54px"></div>
<div class="ind" style="left:680px;top:383px;width:47px"></div>
<div class="t" style="left:685px;top:387.97px;font-size:10.6px;font-weight:400;color:#000;">0,000</div>
<div class="t" style="left:373.5px;top:424.67px;font-size:10.6px;font-weight:400;color:#000;">AO_06</div>
<div class="cb" style="left:373px;top:440px"></div>
<div class="sl" style="left:435px;top:432px"><div class="slf" style="width:7px"></div></div>
<svg class="abs" style="left:0;top:446.2px" width="1280" height="5"><rect x="440.1" y="0" width="1.3" height="4.5" fill="#000"/><rect x="445.1" y="0" width="1.3" height="2.6" fill="#000"/><rect x="450.0" y="0" width="1.3" height="2.6" fill="#000"/><rect x="455.0" y="0" width="1.3" height="2.6" fill="#000"/><rect x="460.0" y="0" width="1.3" height="2.6" fill="#000"/><rect x="464.9" y="0" width="1.3" height="4.5" fill="#000"/><rect x="469.9" y="0" width="1.3" height="2.6" fill="#000"/><rect x="474.9" y="0" width="1.3" height="2.6" fill="#000"/><rect x="479.9" y="0" width="1.3" height="2.6" fill="#000"/><rect x="484.8" y="0" width="1.3" height="2.6" fill="#000"/><rect x="489.8" y="0" width="1.3" height="4.5" fill="#000"/><rect x="494.8" y="0" width="1.3" height="2.6" fill="#000"/><rect x="499.7" y="0" width="1.3" height="2.6" fill="#000"/><rect x="504.7" y="0" width="1.3" height="2.6" fill="#000"/><rect x="509.7" y="0" width="1.3" height="2.6" fill="#000"/><rect x="514.6" y="0" width="1.3" height="4.5" fill="#000"/><rect x="519.6" y="0" width="1.3" height="2.6" fill="#000"/><rect x="524.6" y="0" width="1.3" height="2.6" fill="#000"/><rect x="529.6" y="0" width="1.3" height="2.6" fill="#000"/><rect x="534.5" y="0" width="1.3" height="2.6" fill="#000"/><rect x="539.5" y="0" width="1.3" height="4.5" fill="#000"/></svg>
<div class="t" style="left:289.7px;width:300px;text-align:center;top:451.77px;font-size:10.6px;font-weight:400;color:#000;">0</div>
<div class="t" style="left:314.45px;width:300px;text-align:center;top:451.77px;font-size:10.6px;font-weight:400;color:#000;">5</div>
<div class="t" style="left:339.2px;width:300px;text-align:center;top:451.77px;font-size:10.6px;font-weight:400;color:#000;">10</div>
<div class="t" style="left:363.95000000000005px;width:300px;text-align:center;top:451.77px;font-size:10.6px;font-weight:400;color:#000;">15</div>
<div class="t" style="left:388.70000000000005px;width:300px;text-align:center;top:451.77px;font-size:10.6px;font-weight:400;color:#000;">20</div>
<div class="indtop" style="left:584px;top:425px;width:54px"></div>
<div class="ind ctl" style="left:584px;top:430px;width:47px"></div>
<div class="t" style="left:589px;top:434.97px;font-size:10.6px;font-weight:400;color:#000;">0,000</div>
<div class="incr" style="left:572px;top:427.6px"></div>
<svg style="left:572px;top:427.6px" width="12" height="24"><path d="M6.5 6 L5 9.5 M6.5 6 L7 8" stroke="#222" stroke-width="1.1" fill="none"/><path d="M2 12 H10" stroke="#999" stroke-width="0.8"/><path d="M4.5 15 H8 L6 19" stroke="#333" stroke-width="1.1" fill="none"/></svg>
<div class="indtop" style="left:680px;top:426px;width:54px"></div>
<div class="ind" style="left:680px;top:431px;width:47px"></div>
<div class="t" style="left:685px;top:435.97px;font-size:10.6px;font-weight:400;color:#000;">0,000</div>
<div class="t" style="left:373.5px;top:471.97px;font-size:10.6px;font-weight:400;color:#000;">AO_07</div>
<div class="cb" style="left:373px;top:488px"></div>
<div class="sl" style="left:435px;top:478px"><div class="slf" style="width:7px"></div></div>
<svg class="abs" style="left:0;top:492.2px" width="1280" height="5"><rect x="440.1" y="0" width="1.3" height="4.5" fill="#000"/><rect x="445.1" y="0" width="1.3" height="2.6" fill="#000"/><rect x="450.0" y="0" width="1.3" height="2.6" fill="#000"/><rect x="455.0" y="0" width="1.3" height="2.6" fill="#000"/><rect x="460.0" y="0" width="1.3" height="2.6" fill="#000"/><rect x="464.9" y="0" width="1.3" height="4.5" fill="#000"/><rect x="469.9" y="0" width="1.3" height="2.6" fill="#000"/><rect x="474.9" y="0" width="1.3" height="2.6" fill="#000"/><rect x="479.9" y="0" width="1.3" height="2.6" fill="#000"/><rect x="484.8" y="0" width="1.3" height="2.6" fill="#000"/><rect x="489.8" y="0" width="1.3" height="4.5" fill="#000"/><rect x="494.8" y="0" width="1.3" height="2.6" fill="#000"/><rect x="499.7" y="0" width="1.3" height="2.6" fill="#000"/><rect x="504.7" y="0" width="1.3" height="2.6" fill="#000"/><rect x="509.7" y="0" width="1.3" height="2.6" fill="#000"/><rect x="514.6" y="0" width="1.3" height="4.5" fill="#000"/><rect x="519.6" y="0" width="1.3" height="2.6" fill="#000"/><rect x="524.6" y="0" width="1.3" height="2.6" fill="#000"/><rect x="529.6" y="0" width="1.3" height="2.6" fill="#000"/><rect x="534.5" y="0" width="1.3" height="2.6" fill="#000"/><rect x="539.5" y="0" width="1.3" height="4.5" fill="#000"/></svg>
<div class="t" style="left:289.7px;width:300px;text-align:center;top:497.77px;font-size:10.6px;font-weight:400;color:#000;">0</div>
<div class="t" style="left:314.45px;width:300px;text-align:center;top:497.77px;font-size:10.6px;font-weight:400;color:#000;">5</div>
<div class="t" style="left:339.2px;width:300px;text-align:center;top:497.77px;font-size:10.6px;font-weight:400;color:#000;">10</div>
<div class="t" style="left:363.95000000000005px;width:300px;text-align:center;top:497.77px;font-size:10.6px;font-weight:400;color:#000;">15</div>
<div class="t" style="left:388.70000000000005px;width:300px;text-align:center;top:497.77px;font-size:10.6px;font-weight:400;color:#000;">20</div>
<div class="indtop" style="left:584px;top:472px;width:54px"></div>
<div class="ind ctl" style="left:584px;top:477px;width:47px"></div>
<div class="t" style="left:589px;top:481.97px;font-size:10.6px;font-weight:400;color:#000;">0,000</div>
<div class="incr" style="left:572px;top:474.6px"></div>
<svg style="left:572px;top:474.6px" width="12" height="24"><path d="M6.5 6 L5 9.5 M6.5 6 L7 8" stroke="#222" stroke-width="1.1" fill="none"/><path d="M2 12 H10" stroke="#999" stroke-width="0.8"/><path d="M4.5 15 H8 L6 19" stroke="#333" stroke-width="1.1" fill="none"/></svg>
<div class="indtop" style="left:680px;top:473px;width:54px"></div>
<div class="ind" style="left:680px;top:478px;width:47px"></div>
<div class="t" style="left:685px;top:482.97px;font-size:10.6px;font-weight:400;color:#000;">0,000</div>
<div class="t" style="left:373.5px;top:555.97px;font-size:10.6px;font-weight:400;color:#000;">AO_08</div>
<div class="cb" style="left:373px;top:572px"></div>
<div class="sl" style="left:435px;top:562px"><div class="slf" style="width:7px"></div></div>
<svg class="abs" style="left:0;top:576.2px" width="1280" height="5"><rect x="440.1" y="0" width="1.3" height="4.5" fill="#000"/><rect x="445.1" y="0" width="1.3" height="2.6" fill="#000"/><rect x="450.0" y="0" width="1.3" height="2.6" fill="#000"/><rect x="455.0" y="0" width="1.3" height="2.6" fill="#000"/><rect x="460.0" y="0" width="1.3" height="2.6" fill="#000"/><rect x="464.9" y="0" width="1.3" height="4.5" fill="#000"/><rect x="469.9" y="0" width="1.3" height="2.6" fill="#000"/><rect x="474.9" y="0" width="1.3" height="2.6" fill="#000"/><rect x="479.9" y="0" width="1.3" height="2.6" fill="#000"/><rect x="484.8" y="0" width="1.3" height="2.6" fill="#000"/><rect x="489.8" y="0" width="1.3" height="4.5" fill="#000"/><rect x="494.8" y="0" width="1.3" height="2.6" fill="#000"/><rect x="499.7" y="0" width="1.3" height="2.6" fill="#000"/><rect x="504.7" y="0" width="1.3" height="2.6" fill="#000"/><rect x="509.7" y="0" width="1.3" height="2.6" fill="#000"/><rect x="514.6" y="0" width="1.3" height="4.5" fill="#000"/><rect x="519.6" y="0" width="1.3" height="2.6" fill="#000"/><rect x="524.6" y="0" width="1.3" height="2.6" fill="#000"/><rect x="529.6" y="0" width="1.3" height="2.6" fill="#000"/><rect x="534.5" y="0" width="1.3" height="2.6" fill="#000"/><rect x="539.5" y="0" width="1.3" height="4.5" fill="#000"/></svg>
<div class="t" style="left:289.7px;width:300px;text-align:center;top:581.77px;font-size:10.6px;font-weight:400;color:#000;">0</div>
<div class="t" style="left:314.45px;width:300px;text-align:center;top:581.77px;font-size:10.6px;font-weight:400;color:#000;">5</div>
<div class="t" style="left:339.2px;width:300px;text-align:center;top:581.77px;font-size:10.6px;font-weight:400;color:#000;">10</div>
<div class="t" style="left:363.95000000000005px;width:300px;text-align:center;top:581.77px;font-size:10.6px;font-weight:400;color:#000;">15</div>
<div class="t" style="left:388.70000000000005px;width:300px;text-align:center;top:581.77px;font-size:10.6px;font-weight:400;color:#000;">20</div>
<div class="indtop" style="left:584px;top:557px;width:54px"></div>
<div class="ind ctl" style="left:584px;top:562px;width:47px"></div>
<div class="t" style="left:589px;top:566.97px;font-size:10.6px;font-weight:400;color:#000;">0,000</div>
<div class="incr" style="left:572px;top:559.6px"></div>
<svg style="left:572px;top:559.6px" width="12" height="24"><path d="M6.5 6 L5 9.5 M6.5 6 L7 8" stroke="#222" stroke-width="1.1" fill="none"/><path d="M2 12 H10" stroke="#999" stroke-width="0.8"/><path d="M4.5 15 H8 L6 19" stroke="#333" stroke-width="1.1" fill="none"/></svg>
<div class="indtop" style="left:680px;top:558px;width:54px"></div>
<div class="ind" style="left:680px;top:563px;width:47px"></div>
<div class="t" style="left:685px;top:567.97px;font-size:10.6px;font-weight:400;color:#000;">0,000</div>
<div class="t" style="left:373.5px;top:603.37px;font-size:10.6px;font-weight:400;color:#000;">AO_09</div>
<div class="cb" style="left:373px;top:619px"></div>
<div class="sl" style="left:435px;top:610px"><div class="slf" style="width:7px"></div></div>
<svg class="abs" style="left:0;top:624.2px" width="1280" height="5"><rect x="440.1" y="0" width="1.3" height="4.5" fill="#000"/><rect x="445.1" y="0" width="1.3" height="2.6" fill="#000"/><rect x="450.0" y="0" width="1.3" height="2.6" fill="#000"/><rect x="455.0" y="0" width="1.3" height="2.6" fill="#000"/><rect x="460.0" y="0" width="1.3" height="2.6" fill="#000"/><rect x="464.9" y="0" width="1.3" height="4.5" fill="#000"/><rect x="469.9" y="0" width="1.3" height="2.6" fill="#000"/><rect x="474.9" y="0" width="1.3" height="2.6" fill="#000"/><rect x="479.9" y="0" width="1.3" height="2.6" fill="#000"/><rect x="484.8" y="0" width="1.3" height="2.6" fill="#000"/><rect x="489.8" y="0" width="1.3" height="4.5" fill="#000"/><rect x="494.8" y="0" width="1.3" height="2.6" fill="#000"/><rect x="499.7" y="0" width="1.3" height="2.6" fill="#000"/><rect x="504.7" y="0" width="1.3" height="2.6" fill="#000"/><rect x="509.7" y="0" width="1.3" height="2.6" fill="#000"/><rect x="514.6" y="0" width="1.3" height="4.5" fill="#000"/><rect x="519.6" y="0" width="1.3" height="2.6" fill="#000"/><rect x="524.6" y="0" width="1.3" height="2.6" fill="#000"/><rect x="529.6" y="0" width="1.3" height="2.6" fill="#000"/><rect x="534.5" y="0" width="1.3" height="2.6" fill="#000"/><rect x="539.5" y="0" width="1.3" height="4.5" fill="#000"/></svg>
<div class="t" style="left:289.7px;width:300px;text-align:center;top:629.77px;font-size:10.6px;font-weight:400;color:#000;">0</div>
<div class="t" style="left:314.45px;width:300px;text-align:center;top:629.77px;font-size:10.6px;font-weight:400;color:#000;">5</div>
<div class="t" style="left:339.2px;width:300px;text-align:center;top:629.77px;font-size:10.6px;font-weight:400;color:#000;">10</div>
<div class="t" style="left:363.95000000000005px;width:300px;text-align:center;top:629.77px;font-size:10.6px;font-weight:400;color:#000;">15</div>
<div class="t" style="left:388.70000000000005px;width:300px;text-align:center;top:629.77px;font-size:10.6px;font-weight:400;color:#000;">20</div>
<div class="indtop" style="left:584px;top:605px;width:54px"></div>
<div class="ind ctl" style="left:584px;top:610px;width:47px"></div>
<div class="t" style="left:589px;top:614.97px;font-size:10.6px;font-weight:400;color:#000;">0,000</div>
<div class="incr" style="left:572px;top:607.6px"></div>
<svg style="left:572px;top:607.6px" width="12" height="24"><path d="M6.5 6 L5 9.5 M6.5 6 L7 8" stroke="#222" stroke-width="1.1" fill="none"/><path d="M2 12 H10" stroke="#999" stroke-width="0.8"/><path d="M4.5 15 H8 L6 19" stroke="#333" stroke-width="1.1" fill="none"/></svg>
<div class="indtop" style="left:680px;top:606px;width:54px"></div>
<div class="ind" style="left:680px;top:611px;width:47px"></div>
<div class="t" style="left:685px;top:615.97px;font-size:10.6px;font-weight:400;color:#000;">0,000</div>
<div class="t" style="left:373.5px;top:651.97px;font-size:10.6px;font-weight:400;color:#000;">AO_10</div>
<div class="cb" style="left:373px;top:668px"></div>
<div class="sl" style="left:435px;top:660px"><div class="slf" style="width:7px"></div></div>
<svg class="abs" style="left:0;top:674.2px" width="1280" height="5"><rect x="440.1" y="0" width="1.3" height="4.5" fill="#000"/><rect x="445.1" y="0" width="1.3" height="2.6" fill="#000"/><rect x="450.0" y="0" width="1.3" height="2.6" fill="#000"/><rect x="455.0" y="0" width="1.3" height="2.6" fill="#000"/><rect x="460.0" y="0" width="1.3" height="2.6" fill="#000"/><rect x="464.9" y="0" width="1.3" height="4.5" fill="#000"/><rect x="469.9" y="0" width="1.3" height="2.6" fill="#000"/><rect x="474.9" y="0" width="1.3" height="2.6" fill="#000"/><rect x="479.9" y="0" width="1.3" height="2.6" fill="#000"/><rect x="484.8" y="0" width="1.3" height="2.6" fill="#000"/><rect x="489.8" y="0" width="1.3" height="4.5" fill="#000"/><rect x="494.8" y="0" width="1.3" height="2.6" fill="#000"/><rect x="499.7" y="0" width="1.3" height="2.6" fill="#000"/><rect x="504.7" y="0" width="1.3" height="2.6" fill="#000"/><rect x="509.7" y="0" width="1.3" height="2.6" fill="#000"/><rect x="514.6" y="0" width="1.3" height="4.5" fill="#000"/><rect x="519.6" y="0" width="1.3" height="2.6" fill="#000"/><rect x="524.6" y="0" width="1.3" height="2.6" fill="#000"/><rect x="529.6" y="0" width="1.3" height="2.6" fill="#000"/><rect x="534.5" y="0" width="1.3" height="2.6" fill="#000"/><rect x="539.5" y="0" width="1.3" height="4.5" fill="#000"/></svg>
<div class="t" style="left:289.7px;width:300px;text-align:center;top:679.77px;font-size:10.6px;font-weight:400;color:#000;">0</div>
<div class="t" style="left:314.45px;width:300px;text-align:center;top:679.77px;font-size:10.6px;font-weight:400;color:#000;">5</div>
<div class="t" style="left:339.2px;width:300px;text-align:center;top:679.77px;font-size:10.6px;font-weight:400;color:#000;">10</div>
<div class="t" style="left:363.95000000000005px;width:300px;text-align:center;top:679.77px;font-size:10.6px;font-weight:400;color:#000;">15</div>
<div class="t" style="left:388.70000000000005px;width:300px;text-align:center;top:679.77px;font-size:10.6px;font-weight:400;color:#000;">20</div>
<div class="indtop" style="left:584px;top:653px;width:54px"></div>
<div class="ind ctl" style="left:584px;top:658px;width:47px"></div>
<div class="t" style="left:589px;top:662.97px;font-size:10.6px;font-weight:400;color:#000;">0,000</div>
<div class="incr" style="left:572px;top:655.6px"></div>
<svg style="left:572px;top:655.6px" width="12" height="24"><path d="M6.5 6 L5 9.5 M6.5 6 L7 8" stroke="#222" stroke-width="1.1" fill="none"/><path d="M2 12 H10" stroke="#999" stroke-width="0.8"/><path d="M4.5 15 H8 L6 19" stroke="#333" stroke-width="1.1" fill="none"/></svg>
<div class="indtop" style="left:680px;top:654px;width:54px"></div>
<div class="ind" style="left:680px;top:659px;width:47px"></div>
<div class="t" style="left:685px;top:663.97px;font-size:10.6px;font-weight:400;color:#000;">0,000</div>
<div class="t" style="left:373.5px;top:700.37px;font-size:10.6px;font-weight:400;color:#000;">AO_11</div>
<div class="cb" style="left:373px;top:717px"></div>
<div class="sl" style="left:435px;top:706px"><div class="slf" style="width:7px"></div></div>
<svg class="abs" style="left:0;top:720.2px" width="1280" height="5"><rect x="440.1" y="0" width="1.3" height="4.5" fill="#000"/><rect x="445.1" y="0" width="1.3" height="2.6" fill="#000"/><rect x="450.0" y="0" width="1.3" height="2.6" fill="#000"/><rect x="455.0" y="0" width="1.3" height="2.6" fill="#000"/><rect x="460.0" y="0" width="1.3" height="2.6" fill="#000"/><rect x="464.9" y="0" width="1.3" height="4.5" fill="#000"/><rect x="469.9" y="0" width="1.3" height="2.6" fill="#000"/><rect x="474.9" y="0" width="1.3" height="2.6" fill="#000"/><rect x="479.9" y="0" width="1.3" height="2.6" fill="#000"/><rect x="484.8" y="0" width="1.3" height="2.6" fill="#000"/><rect x="489.8" y="0" width="1.3" height="4.5" fill="#000"/><rect x="494.8" y="0" width="1.3" height="2.6" fill="#000"/><rect x="499.7" y="0" width="1.3" height="2.6" fill="#000"/><rect x="504.7" y="0" width="1.3" height="2.6" fill="#000"/><rect x="509.7" y="0" width="1.3" height="2.6" fill="#000"/><rect x="514.6" y="0" width="1.3" height="4.5" fill="#000"/><rect x="519.6" y="0" width="1.3" height="2.6" fill="#000"/><rect x="524.6" y="0" width="1.3" height="2.6" fill="#000"/><rect x="529.6" y="0" width="1.3" height="2.6" fill="#000"/><rect x="534.5" y="0" width="1.3" height="2.6" fill="#000"/><rect x="539.5" y="0" width="1.3" height="4.5" fill="#000"/></svg>
<div class="t" style="left:289.7px;width:300px;text-align:center;top:725.77px;font-size:10.6px;font-weight:400;color:#000;">0</div>
<div class="t" style="left:314.45px;width:300px;text-align:center;top:725.77px;font-size:10.6px;font-weight:400;color:#000;">5</div>
<div class="t" style="left:339.2px;width:300px;text-align:center;top:725.77px;font-size:10.6px;font-weight:400;color:#000;">10</div>
<div class="t" style="left:363.95000000000005px;width:300px;text-align:center;top:725.77px;font-size:10.6px;font-weight:400;color:#000;">15</div>
<div class="t" style="left:388.70000000000005px;width:300px;text-align:center;top:725.77px;font-size:10.6px;font-weight:400;color:#000;">20</div>
<div class="indtop" style="left:584px;top:700px;width:54px"></div>
<div class="ind ctl" style="left:584px;top:705px;width:47px"></div>
<div class="t" style="left:589px;top:709.97px;font-size:10.6px;font-weight:400;color:#000;">0,000</div>
<div class="incr" style="left:572px;top:702.6px"></div>
<svg style="left:572px;top:702.6px" width="12" height="24"><path d="M6.5 6 L5 9.5 M6.5 6 L7 8" stroke="#222" stroke-width="1.1" fill="none"/><path d="M2 12 H10" stroke="#999" stroke-width="0.8"/><path d="M4.5 15 H8 L6 19" stroke="#333" stroke-width="1.1" fill="none"/></svg>
<div class="indtop" style="left:680px;top:701px;width:54px"></div>
<div class="ind" style="left:680px;top:706px;width:47px"></div>
<div class="t" style="left:685px;top:710.97px;font-size:10.6px;font-weight:400;color:#000;">0,000</div>
<div class="t" style="left:373.5px;top:748.67px;font-size:10.6px;font-weight:400;color:#000;">AO_12</div>
<div class="cb" style="left:373px;top:765px"></div>
<div class="sl" style="left:435px;top:756px"><div class="slf" style="width:7px"></div></div>
<svg class="abs" style="left:0;top:770.2px" width="1280" height="5"><rect x="440.1" y="0" width="1.3" height="4.5" fill="#000"/><rect x="445.1" y="0" width="1.3" height="2.6" fill="#000"/><rect x="450.0" y="0" width="1.3" height="2.6" fill="#000"/><rect x="455.0" y="0" width="1.3" height="2.6" fill="#000"/><rect x="460.0" y="0" width="1.3" height="2.6" fill="#000"/><rect x="464.9" y="0" width="1.3" height="4.5" fill="#000"/><rect x="469.9" y="0" width="1.3" height="2.6" fill="#000"/><rect x="474.9" y="0" width="1.3" height="2.6" fill="#000"/><rect x="479.9" y="0" width="1.3" height="2.6" fill="#000"/><rect x="484.8" y="0" width="1.3" height="2.6" fill="#000"/><rect x="489.8" y="0" width="1.3" height="4.5" fill="#000"/><rect x="494.8" y="0" width="1.3" height="2.6" fill="#000"/><rect x="499.7" y="0" width="1.3" height="2.6" fill="#000"/><rect x="504.7" y="0" width="1.3" height="2.6" fill="#000"/><rect x="509.7" y="0" width="1.3" height="2.6" fill="#000"/><rect x="514.6" y="0" width="1.3" height="4.5" fill="#000"/><rect x="519.6" y="0" width="1.3" height="2.6" fill="#000"/><rect x="524.6" y="0" width="1.3" height="2.6" fill="#000"/><rect x="529.6" y="0" width="1.3" height="2.6" fill="#000"/><rect x="534.5" y="0" width="1.3" height="2.6" fill="#000"/><rect x="539.5" y="0" width="1.3" height="4.5" fill="#000"/></svg>
<div class="t" style="left:289.7px;width:300px;text-align:center;top:775.77px;font-size:10.6px;font-weight:400;color:#000;">0</div>
<div class="t" style="left:314.45px;width:300px;text-align:center;top:775.77px;font-size:10.6px;font-weight:400;color:#000;">5</div>
<div class="t" style="left:339.2px;width:300px;text-align:center;top:775.77px;font-size:10.6px;font-weight:400;color:#000;">10</div>
<div class="t" style="left:363.95000000000005px;width:300px;text-align:center;top:775.77px;font-size:10.6px;font-weight:400;color:#000;">15</div>
<div class="t" style="left:388.70000000000005px;width:300px;text-align:center;top:775.77px;font-size:10.6px;font-weight:400;color:#000;">20</div>
<div class="indtop" style="left:584px;top:748px;width:54px"></div>
<div class="ind ctl" style="left:584px;top:753px;width:47px"></div>
<div class="t" style="left:589px;top:757.97px;font-size:10.6px;font-weight:400;color:#000;">0,000</div>
<div class="incr" style="left:572px;top:750.6px"></div>
<svg style="left:572px;top:750.6px" width="12" height="24"><path d="M6.5 6 L5 9.5 M6.5 6 L7 8" stroke="#222" stroke-width="1.1" fill="none"/><path d="M2 12 H10" stroke="#999" stroke-width="0.8"/><path d="M4.5 15 H8 L6 19" stroke="#333" stroke-width="1.1" fill="none"/></svg>
<div class="indtop" style="left:680px;top:749px;width:54px"></div>
<div class="ind" style="left:680px;top:754px;width:47px"></div>
<div class="t" style="left:685px;top:758.97px;font-size:10.6px;font-weight:400;color:#000;">0,000</div>
<div class="t" style="left:373.5px;top:795.77px;font-size:10.6px;font-weight:400;color:#000;">AO_13</div>
<div class="cb" style="left:373px;top:811px"></div>
<div class="sl" style="left:435px;top:804px"><div class="slf" style="width:7px"></div></div>
<svg class="abs" style="left:0;top:818.2px" width="1280" height="5"><rect x="440.1" y="0" width="1.3" height="4.5" fill="#000"/><rect x="445.1" y="0" width="1.3" height="2.6" fill="#000"/><rect x="450.0" y="0" width="1.3" height="2.6" fill="#000"/><rect x="455.0" y="0" width="1.3" height="2.6" fill="#000"/><rect x="460.0" y="0" width="1.3" height="2.6" fill="#000"/><rect x="464.9" y="0" width="1.3" height="4.5" fill="#000"/><rect x="469.9" y="0" width="1.3" height="2.6" fill="#000"/><rect x="474.9" y="0" width="1.3" height="2.6" fill="#000"/><rect x="479.9" y="0" width="1.3" height="2.6" fill="#000"/><rect x="484.8" y="0" width="1.3" height="2.6" fill="#000"/><rect x="489.8" y="0" width="1.3" height="4.5" fill="#000"/><rect x="494.8" y="0" width="1.3" height="2.6" fill="#000"/><rect x="499.7" y="0" width="1.3" height="2.6" fill="#000"/><rect x="504.7" y="0" width="1.3" height="2.6" fill="#000"/><rect x="509.7" y="0" width="1.3" height="2.6" fill="#000"/><rect x="514.6" y="0" width="1.3" height="4.5" fill="#000"/><rect x="519.6" y="0" width="1.3" height="2.6" fill="#000"/><rect x="524.6" y="0" width="1.3" height="2.6" fill="#000"/><rect x="529.6" y="0" width="1.3" height="2.6" fill="#000"/><rect x="534.5" y="0" width="1.3" height="2.6" fill="#000"/><rect x="539.5" y="0" width="1.3" height="4.5" fill="#000"/></svg>
<div class="t" style="left:289.7px;width:300px;text-align:center;top:823.77px;font-size:10.6px;font-weight:400;color:#000;">0</div>
<div class="t" style="left:314.45px;width:300px;text-align:center;top:823.77px;font-size:10.6px;font-weight:400;color:#000;">5</div>
<div class="t" style="left:339.2px;width:300px;text-align:center;top:823.77px;font-size:10.6px;font-weight:400;color:#000;">10</div>
<div class="t" style="left:363.95000000000005px;width:300px;text-align:center;top:823.77px;font-size:10.6px;font-weight:400;color:#000;">15</div>
<div class="t" style="left:388.70000000000005px;width:300px;text-align:center;top:823.77px;font-size:10.6px;font-weight:400;color:#000;">20</div>
<div class="indtop" style="left:584px;top:796px;width:54px"></div>
<div class="ind ctl" style="left:584px;top:801px;width:47px"></div>
<div class="t" style="left:589px;top:805.97px;font-size:10.6px;font-weight:400;color:#000;">0,000</div>
<div class="incr" style="left:572px;top:798.6px"></div>
<svg style="left:572px;top:798.6px" width="12" height="24"><path d="M6.5 6 L5 9.5 M6.5 6 L7 8" stroke="#222" stroke-width="1.1" fill="none"/><path d="M2 12 H10" stroke="#999" stroke-width="0.8"/><path d="M4.5 15 H8 L6 19" stroke="#333" stroke-width="1.1" fill="none"/></svg>
<div class="indtop" style="left:680px;top:796px;width:54px"></div>
<div class="ind" style="left:680px;top:801px;width:47px"></div>
<div class="t" style="left:685px;top:805.97px;font-size:10.6px;font-weight:400;color:#000;">0,000</div>
<div class="t" style="left:373.5px;top:843.67px;font-size:10.6px;font-weight:400;color:#000;">AO_14</div>
<div class="cb" style="left:373px;top:859px"></div>
<div class="sl" style="left:435px;top:854px"><div class="slf" style="width:7px"></div></div>
<svg class="abs" style="left:0;top:868.2px" width="1280" height="5"><rect x="440.1" y="0" width="1.3" height="4.5" fill="#000"/><rect x="445.1" y="0" width="1.3" height="2.6" fill="#000"/><rect x="450.0" y="0" width="1.3" height="2.6" fill="#000"/><rect x="455.0" y="0" width="1.3" height="2.6" fill="#000"/><rect x="460.0" y="0" width="1.3" height="2.6" fill="#000"/><rect x="464.9" y="0" width="1.3" height="4.5" fill="#000"/><rect x="469.9" y="0" width="1.3" height="2.6" fill="#000"/><rect x="474.9" y="0" width="1.3" height="2.6" fill="#000"/><rect x="479.9" y="0" width="1.3" height="2.6" fill="#000"/><rect x="484.8" y="0" width="1.3" height="2.6" fill="#000"/><rect x="489.8" y="0" width="1.3" height="4.5" fill="#000"/><rect x="494.8" y="0" width="1.3" height="2.6" fill="#000"/><rect x="499.7" y="0" width="1.3" height="2.6" fill="#000"/><rect x="504.7" y="0" width="1.3" height="2.6" fill="#000"/><rect x="509.7" y="0" width="1.3" height="2.6" fill="#000"/><rect x="514.6" y="0" width="1.3" height="4.5" fill="#000"/><rect x="519.6" y="0" width="1.3" height="2.6" fill="#000"/><rect x="524.6" y="0" width="1.3" height="2.6" fill="#000"/><rect x="529.6" y="0" width="1.3" height="2.6" fill="#000"/><rect x="534.5" y="0" width="1.3" height="2.6" fill="#000"/><rect x="539.5" y="0" width="1.3" height="4.5" fill="#000"/></svg>
<div class="t" style="left:289.7px;width:300px;text-align:center;top:873.77px;font-size:10.6px;font-weight:400;color:#000;">0</div>
<div class="t" style="left:314.45px;width:300px;text-align:center;top:873.77px;font-size:10.6px;font-weight:400;color:#000;">5</div>
<div class="t" style="left:339.2px;width:300px;text-align:center;top:873.77px;font-size:10.6px;font-weight:400;color:#000;">10</div>
<div class="t" style="left:363.95000000000005px;width:300px;text-align:center;top:873.77px;font-size:10.6px;font-weight:400;color:#000;">15</div>
<div class="t" style="left:388.70000000000005px;width:300px;text-align:center;top:873.77px;font-size:10.6px;font-weight:400;color:#000;">20</div>
<div class="indtop" style="left:584px;top:844px;width:54px"></div>
<div class="ind ctl" style="left:584px;top:849px;width:47px"></div>
<div class="t" style="left:589px;top:853.97px;font-size:10.6px;font-weight:400;color:#000;">0,000</div>
<div class="incr" style="left:572px;top:846.6px"></div>
<svg style="left:572px;top:846.6px" width="12" height="24"><path d="M6.5 6 L5 9.5 M6.5 6 L7 8" stroke="#222" stroke-width="1.1" fill="none"/><path d="M2 12 H10" stroke="#999" stroke-width="0.8"/><path d="M4.5 15 H8 L6 19" stroke="#333" stroke-width="1.1" fill="none"/></svg>
<div class="indtop" style="left:680px;top:845px;width:54px"></div>
<div class="ind" style="left:680px;top:850px;width:47px"></div>
<div class="t" style="left:685px;top:854.97px;font-size:10.6px;font-weight:400;color:#000;">0,000</div>
<div class="t" style="left:373.5px;top:891.97px;font-size:10.6px;font-weight:400;color:#000;">AO_15</div>
<div class="cb" style="left:373px;top:908px"></div>
<div class="sl" style="left:435px;top:900px"><div class="slf" style="width:7px"></div></div>
<svg class="abs" style="left:0;top:914.2px" width="1280" height="5"><rect x="440.1" y="0" width="1.3" height="4.5" fill="#000"/><rect x="445.1" y="0" width="1.3" height="2.6" fill="#000"/><rect x="450.0" y="0" width="1.3" height="2.6" fill="#000"/><rect x="455.0" y="0" width="1.3" height="2.6" fill="#000"/><rect x="460.0" y="0" width="1.3" height="2.6" fill="#000"/><rect x="464.9" y="0" width="1.3" height="4.5" fill="#000"/><rect x="469.9" y="0" width="1.3" height="2.6" fill="#000"/><rect x="474.9" y="0" width="1.3" height="2.6" fill="#000"/><rect x="479.9" y="0" width="1.3" height="2.6" fill="#000"/><rect x="484.8" y="0" width="1.3" height="2.6" fill="#000"/><rect x="489.8" y="0" width="1.3" height="4.5" fill="#000"/><rect x="494.8" y="0" width="1.3" height="2.6" fill="#000"/><rect x="499.7" y="0" width="1.3" height="2.6" fill="#000"/><rect x="504.7" y="0" width="1.3" height="2.6" fill="#000"/><rect x="509.7" y="0" width="1.3" height="2.6" fill="#000"/><rect x="514.6" y="0" width="1.3" height="4.5" fill="#000"/><rect x="519.6" y="0" width="1.3" height="2.6" fill="#000"/><rect x="524.6" y="0" width="1.3" height="2.6" fill="#000"/><rect x="529.6" y="0" width="1.3" height="2.6" fill="#000"/><rect x="534.5" y="0" width="1.3" height="2.6" fill="#000"/><rect x="539.5" y="0" width="1.3" height="4.5" fill="#000"/></svg>
<div class="t" style="left:289.7px;width:300px;text-align:center;top:919.77px;font-size:10.6px;font-weight:400;color:#000;">0</div>
<div class="t" style="left:314.45px;width:300px;text-align:center;top:919.77px;font-size:10.6px;font-weight:400;color:#000;">5</div>
<div class="t" style="left:339.2px;width:300px;text-align:center;top:919.77px;font-size:10.6px;font-weight:400;color:#000;">10</div>
<div class="t" style="left:363.95000000000005px;width:300px;text-align:center;top:919.77px;font-size:10.6px;font-weight:400;color:#000;">15</div>
<div class="t" style="left:388.70000000000005px;width:300px;text-align:center;top:919.77px;font-size:10.6px;font-weight:400;color:#000;">20</div>
<div class="indtop" style="left:584px;top:891px;width:54px"></div>
<div class="ind ctl" style="left:584px;top:896px;width:47px"></div>
<div class="t" style="left:589px;top:900.97px;font-size:10.6px;font-weight:400;color:#000;">0,000</div>
<div class="incr" style="left:572px;top:893.6px"></div>
<svg style="left:572px;top:893.6px" width="12" height="24"><path d="M6.5 6 L5 9.5 M6.5 6 L7 8" stroke="#222" stroke-width="1.1" fill="none"/><path d="M2 12 H10" stroke="#999" stroke-width="0.8"/><path d="M4.5 15 H8 L6 19" stroke="#333" stroke-width="1.1" fill="none"/></svg>
<div class="indtop" style="left:680px;top:892px;width:54px"></div>
<div class="ind" style="left:680px;top:897px;width:47px"></div>
<div class="t" style="left:685px;top:901.97px;font-size:10.6px;font-weight:400;color:#000;">0,000</div>
<div class="t" style="left:770px;top:89.57px;font-size:10.6px;font-weight:400;color:#000;">DIGITAL DO_A0 (V)</div>
<div style="left:769px;top:104px;width:408px;height:336px;background:#c5c5c5;overflow:hidden"><div style="left:0;top:0;width:14px;height:336px;background:linear-gradient(90deg,#c8c8c8 0,#dadada 3px,#d2d2d2 10px,#c5c5c5 14px)"></div><div style="left:391px;top:0;width:17px;height:336px;background:linear-gradient(90deg,#c5c5c5 0,#a8a8a8 9px,#7e7e7e 15px,#5a5a5a 17px)"></div><div style="left:0;top:0;width:408px;height:3px;background:linear-gradient(90deg,rgba(255,255,255,0.3),rgba(255,255,255,0.3) 394px,rgba(255,255,255,0))"></div><div style="left:2px;top:330px;width:406px;height:6px;background:linear-gradient(rgba(0,0,0,0),rgba(0,0,0,0.1) 3px,rgba(0,0,0,0.25) 5px,rgba(0,0,0,0.38) 6px)"></div></div>
<div style="left:844px;top:126px;width:314px;height:275px;background:#000"></div>
<div style="left:844px;top:401px;width:314px;height:1px;background:#e6e6e6"></div>
<div class="t" style="left:534.5px;width:300px;text-align:right;top:121.07px;font-size:10.6px;font-weight:400;color:#000;">25</div>
<div class="t" style="left:534.5px;width:300px;text-align:right;top:148.47px;font-size:10.6px;font-weight:400;color:#000;">22,5</div>
<div class="t" style="left:534.5px;width:300px;text-align:right;top:175.87px;font-size:10.6px;font-weight:400;color:#000;">20</div>
<div class="t" style="left:534.5px;width:300px;text-align:right;top:203.27px;font-size:10.6px;font-weight:400;color:#000;">17,5</div>
<div class="t" style="left:534.5px;width:300px;text-align:right;top:230.67px;font-size:10.6px;font-weight:400;color:#000;">15</div>
<div class="t" style="left:534.5px;width:300px;text-align:right;top:258.07px;font-size:10.6px;font-weight:400;color:#000;">12,5</div>
<div class="t" style="left:534.5px;width:300px;text-align:right;top:285.47px;font-size:10.6px;font-weight:400;color:#000;">10</div>
<div class="t" style="left:534.5px;width:300px;text-align:right;top:312.87px;font-size:10.6px;font-weight:400;color:#000;">7,5</div>
<div class="t" style="left:534.5px;width:300px;text-align:right;top:340.27px;font-size:10.6px;font-weight:400;color:#000;">5</div>
<div class="t" style="left:534.5px;width:300px;text-align:right;top:367.67px;font-size:10.6px;font-weight:400;color:#000;">2,5</div>
<div class="t" style="left:534.5px;width:300px;text-align:right;top:395.07px;font-size:10.6px;font-weight:400;color:#000;">0</div>
<svg style="left:0;top:0" width="1280" height="994"><rect x="837.5" y="126.00" width="4.5" height="1" fill="#000"/><rect x="837.5" y="153.40" width="4.5" height="1" fill="#000"/><rect x="837.5" y="180.80" width="4.5" height="1" fill="#000"/><rect x="837.5" y="208.20" width="4.5" height="1" fill="#000"/><rect x="837.5" y="235.60" width="4.5" height="1" fill="#000"/><rect x="837.5" y="263.00" width="4.5" height="1" fill="#000"/><rect x="837.5" y="290.40" width="4.5" height="1" fill="#000"/><rect x="837.5" y="317.80" width="4.5" height="1" fill="#000"/><rect x="837.5" y="345.20" width="4.5" height="1" fill="#000"/><rect x="837.5" y="372.60" width="4.5" height="1" fill="#000"/><rect x="837.5" y="400.00" width="4.5" height="1" fill="#000"/></svg>
<div style="left:844px;top:401px;width:1px;height:6px;background:#000"></div>
<div style="left:1157px;top:401px;width:1px;height:6px;background:#000"></div>
<div class="t" style="left:693.5px;width:300px;text-align:center;top:408.57px;font-size:10.6px;font-weight:400;color:#000;">3189,999</div>
<div style="left:1128px;top:408px;width:48px;height:14px;overflow:hidden;background:#cecece"><div class="t" style="left:5.5px;top:0.6px;font-size:10.6px">3194,999</div></div>
<div class="t" style="left:847.5px;width:300px;text-align:center;top:423.77px;font-size:10.6px;font-weight:400;color:#000;">Time</div>
<div class="t" style="left:773px;top:256px;width:60px;text-align:center;font-size:10.6px;transform:rotate(-90deg)">Amplitude</div>
<svg style="left:0;top:0" width="1280" height="994"><clipPath id="pc"><rect x="844" y="126" width="314" height="275"/></clipPath><g clip-path="url(#pc)"><path d="M833.5 401 V137.5 H837.1 V269 H836.1 V401" stroke="#ffffff" stroke-width="1.7" fill="none"/><path d="M839.6 401 V137.5 H843.1 V269 H842.1 V401" stroke="#f06060" stroke-width="1.7" fill="none"/><path d="M845.4 401 V137.5 H849.6 V269 H848.7 V401" stroke="#40e040" stroke-width="1.7" fill="none"/><path d="M852.7 401 V137.5 H856.4 V269 H855.2 V401" stroke="#70c0f0" stroke-width="1.7" fill="none"/><path d="M909.3 401 V137.5 H912.9 V269 H911.9 V401" stroke="#ffffff" stroke-width="1.7" fill="none"/><path d="M915.4 401 V137.5 H918.9 V269 H917.9 V401" stroke="#f06060" stroke-width="1.7" fill="none"/><path d="M921.2 401 V137.5 H925.4 V269 H924.5 V401" stroke="#40e040" stroke-width="1.7" fill="none"/><path d="M928.5 401 V137.5 H932.2 V269 H931.0 V401" stroke="#70c0f0" stroke-width="1.7" fill="none"/><path d="M983.5 401 V137.5 H987.1 V269 H986.1 V401" stroke="#ffffff" stroke-width="1.7" fill="none"/><path d="M989.6 401 V137.5 H993.1 V269 H992.1 V401" stroke="#f06060" stroke-width="1.7" fill="none"/><path d="M995.4 401 V137.5 H999.6 V269 H998.7 V401" stroke="#40e040" stroke-width="1.7" fill="none"/><path d="M1002.7 401 V137.5 H1006.4 V269 H1005.2 V401" stroke="#70c0f0" stroke-width="1.7" fill="none"/><path d="M1058.5 401 V137.5 H1062.1 V269 H1061.1 V401" stroke="#ffffff" stroke-width="1.7" fill="none"/><path d="M1064.6 401 V137.5 H1068.1 V269 H1067.1 V401" stroke="#f06060" stroke-width="1.7" fill="none"/><path d="M1070.4 401 V137.5 H1074.6 V269 H1073.7 V401" stroke="#40e040" stroke-width="1.7" fill="none"/><path d="M1077.7 401 V137.5 H1081.4 V269 H1080.2 V401" stroke="#70c0f0" stroke-width="1.7" fill="none"/><path d="M1133.3 401 V137.5 H1136.9 V269 H1135.9 V401" stroke="#ffffff" stroke-width="1.7" fill="none"/><path d="M1139.4 401 V137.5 H1142.9 V269 H1141.9 V401" stroke="#f06060" stroke-width="1.7" fill="none"/><path d="M1145.2 401 V137.5 H1149.4 V269 H1148.5 V401" stroke="#40e040" stroke-width="1.7" fill="none"/><path d="M1152.5 401 V137.5 H1156.2 V269 H1155.0 V401" stroke="#70c0f0" stroke-width="1.7" fill="none"/></g></svg>
<div class="indtop" style="left:1182px;top:98px;width:54px"></div>
<div class="ind" style="left:1182px;top:103px;width:47px"></div>
<div class="t" style="left:1187px;top:107.97px;font-size:10.6px;font-weight:400;color:#000;">24,00</div>
<div class="t" style="left:778px;top:460.57px;font-size:10.6px;font-weight:400;color:#000;">ANALOG AO_00 (mA)</div>
<div style="left:769px;top:476px;width:408px;height:312px;background:#c5c5c5;overflow:hidden"><div style="left:0;top:0;width:14px;height:312px;background:linear-gradient(90deg,#c8c8c8 0,#dadada 3px,#d2d2d2 10px,#c5c5c5 14px)"></div><div style="left:391px;top:0;width:17px;height:312px;background:linear-gradient(90deg,#c5c5c5 0,#a8a8a8 9px,#7e7e7e 15px,#5a5a5a 17px)"></div><div style="left:0;top:0;width:408px;height:3px;background:linear-gradient(90deg,rgba(255,255,255,0.3),rgba(255,255,255,0.3) 394px,rgba(255,255,255,0))"></div><div style="left:2px;top:306px;width:406px;height:6px;background:linear-gradient(rgba(0,0,0,0),rgba(0,0,0,0.1) 3px,rgba(0,0,0,0.25) 5px,rgba(0,0,0,0.38) 6px)"></div></div>
<div style="left:834px;top:498px;width:306px;height:250px;background:#000"></div>
<div style="left:834px;top:748px;width:306px;height:1px;background:#f0f0f0"></div>
<div class="t" style="left:524.2px;width:300px;text-align:right;top:492.57px;font-size:10.6px;font-weight:400;color:#000;">25</div>
<div class="t" style="left:524.2px;width:300px;text-align:right;top:517.62px;font-size:10.6px;font-weight:400;color:#000;">22,5</div>
<div class="t" style="left:524.2px;width:300px;text-align:right;top:542.67px;font-size:10.6px;font-weight:400;color:#000;">20</div>
<div class="t" style="left:524.2px;width:300px;text-align:right;top:567.72px;font-size:10.6px;font-weight:400;color:#000;">17,5</div>
<div class="t" style="left:524.2px;width:300px;text-align:right;top:592.77px;font-size:10.6px;font-weight:400;color:#000;">15</div>
<div class="t" style="left:524.2px;width:300px;text-align:right;top:617.82px;font-size:10.6px;font-weight:400;color:#000;">12,5</div>
<div class="t" style="left:524.2px;width:300px;text-align:right;top:642.87px;font-size:10.6px;font-weight:400;color:#000;">10</div>
<div class="t" style="left:524.2px;width:300px;text-align:right;top:667.92px;font-size:10.6px;font-weight:400;color:#000;">7,5</div>
<div class="t" style="left:524.2px;width:300px;text-align:right;top:692.97px;font-size:10.6px;font-weight:400;color:#000;">5</div>
<div class="t" style="left:524.2px;width:300px;text-align:right;top:718.02px;font-size:10.6px;font-weight:400;color:#000;">2,5</div>
<div class="t" style="left:524.2px;width:300px;text-align:right;top:743.07px;font-size:10.6px;font-weight:400;color:#000;">0</div>
<svg style="left:0;top:0" width="1280" height="994"><rect x="827" y="497.50" width="5" height="1" fill="#000"/><rect x="827" y="522.55" width="5" height="1" fill="#000"/><rect x="827" y="547.60" width="5" height="1" fill="#000"/><rect x="827" y="572.65" width="5" height="1" fill="#000"/><rect x="827" y="597.70" width="5" height="1" fill="#000"/><rect x="827" y="622.75" width="5" height="1" fill="#000"/><rect x="827" y="647.80" width="5" height="1" fill="#000"/><rect x="827" y="672.85" width="5" height="1" fill="#000"/><rect x="827" y="697.90" width="5" height="1" fill="#000"/><rect x="827" y="722.95" width="5" height="1" fill="#000"/><rect x="827" y="748.00" width="5" height="1" fill="#000"/></svg>
<div style="left:834px;top:749px;width:1px;height:6px;background:#000"></div>
<div style="left:1139px;top:749px;width:1px;height:6px;background:#000"></div>
<div class="t" style="left:683.5px;width:300px;text-align:center;top:756.57px;font-size:10.6px;font-weight:400;color:#000;">50804,999</div>
<div class="t" style="left:988.4000000000001px;width:300px;text-align:center;top:756.37px;font-size:10.6px;font-weight:400;color:#000;">50805,999</div>
<div class="t" style="left:833.5px;width:300px;text-align:center;top:771.57px;font-size:10.6px;font-weight:400;color:#000;">Time</div>
<div class="t" style="left:763px;top:616.5px;width:60px;text-align:center;font-size:10.6px;transform:rotate(-90deg)">Amplitude</div>
<div class="indtop" style="left:1182px;top:469.5px;width:54px"></div>
<div class="ind" style="left:1182px;top:474.5px;width:47px"></div>
<div class="t" style="left:1187px;top:479.47px;font-size:10.6px;font-weight:400;color:#000;">0,00</div>
<svg style="left:1px;top:1.5px" width="1280" height="994"><g fill="#a2a2a2"><path d="M917.5 896.5 C924 891 937 889.5 943 891 L966.5 917 L950 926 L945.5 928 L931 945 C929.5 935 931 922 934 913 Z"/><path d="M952 897.5 C958 893 968 890.5 975 890 L966.5 916 L957.5 901.5 Z"/></g></svg>
<svg style="left:0px;top:0px" width="1280" height="994"><g fill="#dcdcdc"><path d="M917.5 896.5 C924 891 937 889.5 943 891 L966.5 917 L950 926 L945.5 928 L931 945 C929.5 935 931 922 934 913 Z"/><path d="M952 897.5 C958 893 968 890.5 975 890 L966.5 916 L957.5 901.5 Z"/></g></svg>
<div class="t" style="left:979px;top:890.0px;font-size:24px;font-weight:700;color:#a2a2a2;-webkit-text-stroke:0.9px #a2a2a2;transform:scaleX(1.02);transform-origin:0 0;line-height:1">NATIONAL</div>
<div class="t" style="left:971px;top:914.0px;font-size:24px;font-weight:700;color:#a2a2a2;-webkit-text-stroke:0.9px #a2a2a2;transform:scaleX(1.02);transform-origin:0 0;line-height:1">INSTRUMENTS</div>
<div class="t" style="left:1146px;top:915.0px;font-size:6px;font-weight:700;color:#a2a2a2;-webkit-text-stroke:0.9px #a2a2a2;transform:scaleX(1);transform-origin:0 0;line-height:1">TM</div>
<div class="t" style="left:946px;top:944.0px;font-size:25px;font-weight:700;color:#a2a2a2;-webkit-text-stroke:0.9px #a2a2a2;transform:scaleX(0.83);transform-origin:0 0;line-height:1">LabVIEW<span style="font-size:9px;vertical-align:11px">TM</span> Evaluation Software</div>
<div class="t" style="left:978px;top:888.5px;font-size:24px;font-weight:700;color:#dcdcdc;-webkit-text-stroke:0.9px #dcdcdc;transform:scaleX(1.02);transform-origin:0 0;line-height:1">NATIONAL</div>
<div class="t" style="left:970px;top:912.5px;font-size:24px;font-weight:700;color:#dcdcdc;-webkit-text-stroke:0.9px #dcdcdc;transform:scaleX(1.02);transform-origin:0 0;line-height:1">INSTRUMENTS</div>
<div class="t" style="left:1145px;top:913.5px;font-size:6px;font-weight:700;color:#dcdcdc;-webkit-text-stroke:0.9px #dcdcdc;transform:scaleX(1);transform-origin:0 0;line-height:1">TM</div>
<div class="t" style="left:945px;top:942.5px;font-size:25px;font-weight:700;color:#dcdcdc;-webkit-text-stroke:0.9px #dcdcdc;transform:scaleX(0.83);transform-origin:0 0;line-height:1">LabVIEW<span style="font-size:9px;vertical-align:11px">TM</span> Evaluation Software</div>
<div class="t" style="left:826px;top:808.67px;font-size:10.6px;font-weight:400;color:#000;">Control-Case</div>
<div style="left:825px;top:824px;width:99px;height:111px;border:1px solid #7a7a7a;box-sizing:border-box"></div>
<div style="left:826px;top:825px;width:99px;height:111px;border:1px solid #f4f4f4;box-sizing:border-box"></div>
<div class="t" style="left:837.5px;top:831.47px;font-size:10.6px;font-weight:400;color:#000;">DigitalInput</div>
<div style="left:838px;top:848px;width:10px;height:10px;border-radius:50%;background:#fff;border:1px solid;border-color:#303030 #f0f0f0 #f0f0f0 #303030;box-shadow:inset 1px 1px 0 #808080"></div>
<div style="left:842px;top:852px;width:4px;height:4px;border-radius:50%;background:#000"></div>
<div class="t" style="left:837.5px;top:867.47px;font-size:10.6px;font-weight:400;color:#000;">AnalogInput</div>
<div style="left:838px;top:884px;width:10px;height:10px;border-radius:50%;background:#fff;border:1px solid;border-color:#303030 #f0f0f0 #f0f0f0 #303030;box-shadow:inset 1px 1px 0 #808080"></div>
<div class="t" style="left:836.8px;top:903.37px;font-size:10.6px;font-weight:400;color:#000;">Digital &amp; Analog</div>
<div style="left:836px;top:919px;width:10px;height:10px;border-radius:50%;background:#fff;border:1px solid;border-color:#303030 #f0f0f0 #f0f0f0 #303030;box-shadow:inset 1px 1px 0 #808080"></div>
<div class="t" style="left:950px;top:820.57px;font-size:10.6px;font-weight:400;color:#000;">Test-Case</div>
<div style="left:949px;top:836px;width:107px;height:82px;border:1px solid #7a7a7a;box-sizing:border-box"></div>
<div style="left:950px;top:837px;width:107px;height:82px;border:1px solid #f4f4f4;box-sizing:border-box"></div>
<div class="t" style="left:960.5px;top:839.37px;font-size:10.6px;font-weight:400;color:#000;">Electrical</div>
<div style="left:961px;top:856px;width:10px;height:10px;border-radius:50%;background:#fff;border:1px solid;border-color:#303030 #f0f0f0 #f0f0f0 #303030;box-shadow:inset 1px 1px 0 #808080"></div>
<div class="t" style="left:961px;top:875.47px;font-size:10.6px;font-weight:400;color:#000;">Time</div>
<div style="left:961px;top:891px;width:10px;height:10px;border-radius:50%;background:#fff;border:1px solid;border-color:#303030 #f0f0f0 #f0f0f0 #303030;box-shadow:inset 1px 1px 0 #808080"></div>
<div style="left:965px;top:895px;width:4px;height:4px;border-radius:50%;background:#000"></div>
<div class="t" style="left:1093px;top:841.57px;font-size:10.6px;font-weight:400;color:#000;">ON</div>
<div class="t" style="left:1093.8px;top:885.37px;font-size:10.6px;font-weight:400;color:#000;">OFF</div>
<div style="left:1097px;top:866px;width:15px;height:13px;border-radius:50%;background:#8c8c8c;filter:blur(1px)"></div>
<div style="left:1092px;top:874px;width:14px;height:7px;border-radius:50%;background:#d0d0d0"></div>
<div style="left:1094px;top:857px;width:10px;height:22px;border-radius:5px 5px 3px 3px;background:linear-gradient(#eaeaea 0,#a0a0a0 5px,#5a5a5a 10px,#444 100%)"></div>
</body></html>
